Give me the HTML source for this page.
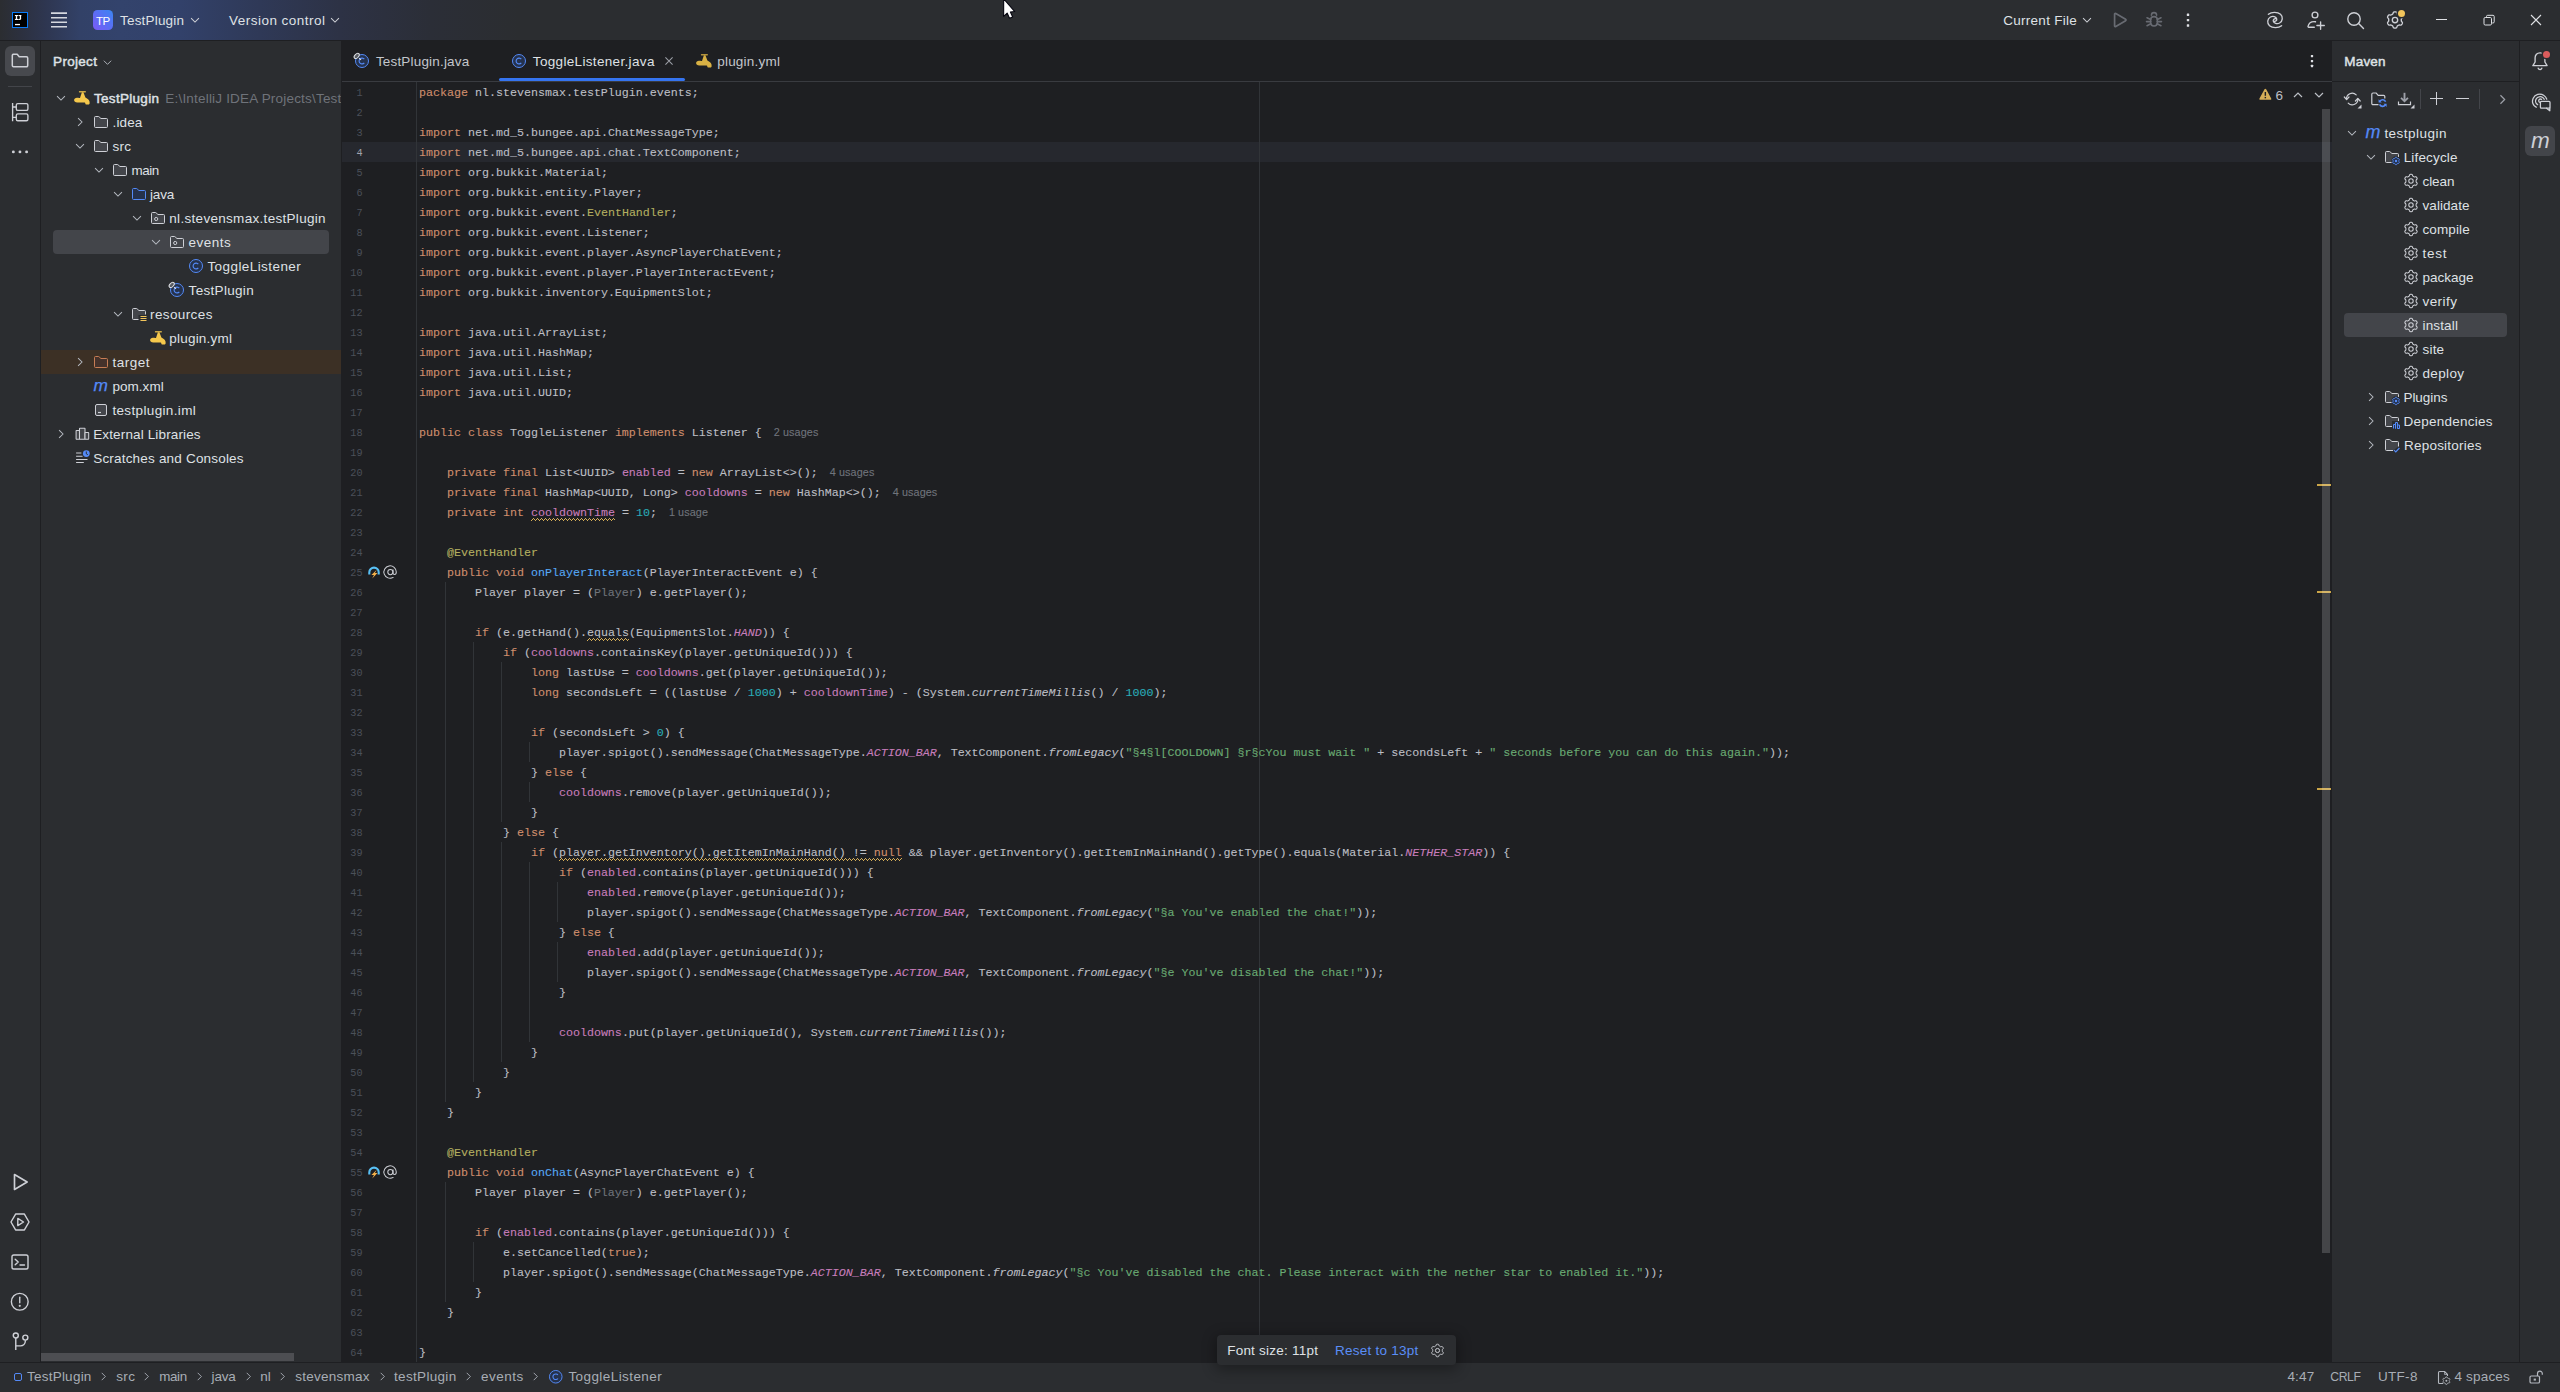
<!DOCTYPE html>
<html><head><meta charset="utf-8"><title>TestPlugin – ToggleListener.java</title>
<style>
html,body{margin:0;padding:0;}
body{width:2560px;height:1392px;overflow:hidden;background:#2b2d30;position:relative;font-family:"Liberation Sans",sans-serif;font-size:13.5px;color:#dfe1e5;}
.t{position:absolute;white-space:pre;line-height:20px;height:20px;}
.r{position:absolute;}
.i{position:absolute;overflow:visible;}
.code{position:absolute;left:419px;white-space:pre;font-family:"Liberation Mono",monospace;font-size:11.66px;line-height:20px;height:20px;color:#bcbec4;-webkit-text-stroke:0.1px;}
.ln{position:absolute;left:322px;width:40.6px;text-align:right;font-family:"Liberation Mono",monospace;font-size:11.5px;line-height:20px;height:20px;color:#4b5059;transform:scaleX(0.885);transform-origin:100% 50%;}
.k{color:#cf8e6d}.s{color:#6aab73}.n{color:#2aacb8}.f{color:#c77dbb}.m{color:#56a8f5}.a{color:#b3ae60}
.sf{color:#c77dbb;font-style:italic}.sm{font-style:italic}.g{color:#6f737a}
.h{line-height:0;font-family:"Liberation Sans",sans-serif;font-size:10.8px;color:#70747c;letter-spacing:0.1px}
.w{background:repeat-x left bottom;}

</style></head>
<body>
<div class="r" style="left:0px;top:0px;width:2560px;height:40px;background:#2b2d30;background:linear-gradient(90deg,#2b2d31 0px,#2c303e 20px,#2e3650 45px,#324167 80px,#33436c 120px,#32416a 180px,#2f3957 260px,#2d3245 340px,#2b2e37 430px,#2b2d30 520px);"></div>
<div class="r" style="left:0px;top:40px;width:2560px;height:1px;background:#1e1f22;"></div>
<div class="r" style="left:0px;top:41px;width:40px;height:1321px;background:#2b2d30;"></div>
<div class="r" style="left:40px;top:41px;width:1px;height:1321px;background:#1e1f22;"></div>
<div class="r" style="left:41px;top:41px;width:300px;height:1321px;background:#2b2d30;"></div>
<div class="r" style="left:341px;top:41px;width:1px;height:1321px;background:#1e1f22;"></div>
<div class="r" style="left:342px;top:41px;width:1990px;height:1321px;background:#1e1f22;"></div>
<div class="r" style="left:342px;top:81px;width:1990px;height:1px;background:#393b40;"></div>
<div class="r" style="left:2332px;top:41px;width:187px;height:1321px;background:#2b2d30;"></div>
<div class="r" style="left:2332px;top:81px;width:187px;height:1px;background:#1e1f22;"></div>
<div class="r" style="left:2519px;top:41px;width:1px;height:1321px;background:#1e1f22;"></div>
<div class="r" style="left:2520px;top:41px;width:40px;height:1321px;background:#2b2d30;"></div>
<div class="r" style="left:0px;top:1362px;width:2560px;height:30px;background:#2b2d30;"></div>
<div class="r" style="left:0px;top:1362px;width:2560px;height:1px;background:#1e1f22;"></div>
<div class="r" style="left:11.900px;top:11.900px;width:16.200px;height:16.200px;background:#000;box-sizing:border-box;border:1.250px solid #087cfa;"></div>
<svg class="i" style="left:0;top:0" width="80" height="40" viewBox="0 0 80 40"><g fill="#fff"><rect x="14.900" y="15" width="3.200" height="1.100"/><rect x="15.850" y="15" width="1.300" height="5"/><rect x="14.900" y="18.900" width="3.200" height="1.100"/><rect x="18.500" y="15" width="2.800" height="1.100"/><rect x="19.800" y="15" width="1.300" height="4.300"/><path d="M21.100 18.600c0 1-.6 1.400-1.500 1.400h-1.300v-1.100h1.100c.3 0 .4-.1.400-.4z"/><rect x="15" y="23.900" width="5" height="1.300"/></g><g stroke="#d5d8df" stroke-width="1.600"><path d="M51 13.100h16M51 17.800h16M51 22.250h16M51 26.800h16"/></g></svg>
<div class="r" style="left:93px;top:10px;width:20px;height:20px;border-radius:4.5px;background:linear-gradient(45deg,#7a5af5 0%,#5b6ef5 50%,#3a86f2 100%);"></div>
<span class="t" style="left:96.00px;top:11.00px;font-size:11.5px;color:#ffffff;letter-spacing:-0.403px;">TP</span>
<span class="t" style="left:120.00px;top:11.00px;font-size:13.5px;color:#dfe1e5;letter-spacing:0.189px;">TestPlugin</span>
<svg class="i" style="left:188.00px;top:13.30px;" width="14" height="14" viewBox="0 0 16 16" fill="none"><path d="M3.5 5.8L8 10.3l4.5-4.5" stroke="#ced0d6" stroke-width="1.15"/></svg>
<span class="t" style="left:229.00px;top:11.00px;font-size:13.5px;color:#dfe1e5;letter-spacing:0.478px;">Version control</span>
<svg class="i" style="left:328.00px;top:13.30px;" width="14" height="14" viewBox="0 0 16 16" fill="none"><path d="M3.5 5.8L8 10.3l4.5-4.5" stroke="#ced0d6" stroke-width="1.15"/></svg>
<span class="t" style="left:2003.30px;top:11.00px;font-size:13.5px;color:#dfe1e5;letter-spacing:0.261px;">Current File</span>
<svg class="i" style="left:2080.00px;top:13.30px;" width="14" height="14" viewBox="0 0 16 16" fill="none"><path d="M3.5 5.8L8 10.3l4.5-4.5" stroke="#ced0d6" stroke-width="1.15"/></svg>
<svg class="i" style="left:2109.60px;top:9.80px;" width="20" height="20" viewBox="0 0 20 20" fill="none"><path d="M4.600 4.100a.8.8 0 0 1 1.200-.7L15.600 9.300a.8.8 0 0 1 0 1.400L5.800 16.600a.8.800 0 0 1-1.200-.7z" stroke="#686b72" stroke-width="1.700" stroke-linejoin="round"/></svg>
<svg class="i" style="left:2144.00px;top:9.20px;" width="20" height="20" viewBox="0 0 20 20" fill="none"><g stroke="#686b72" stroke-width="1.550" stroke-linecap="round"><rect x="6.700" y="7.600" width="6.600" height="9.400" rx="3.200"/><path d="M7.400 6.200a2.600 2.600 0 0 1 5.200 0"/><path d="M6.700 10.500L3 8.700M6.700 12.600H2.500M6.700 14.800L3 16.700M13.300 10.500L17 8.700M13.300 12.600H17.500M13.300 14.800L17 16.700"/></g></svg>
<svg class="i" style="left:2180px;top:0" width="16" height="40" viewBox="0 0 16 40"><g fill="#dfe1e5"><rect x="6.800" y="13.600" width="2.400" height="2.400" rx=".5"/><rect x="6.800" y="18.900" width="2.400" height="2.400" rx=".5"/><rect x="6.800" y="24.300" width="2.400" height="2.400" rx=".5"/></g></svg>
<svg class="i" style="left:2265.00px;top:9.80px;" width="20" height="20" viewBox="0 0 20 20" fill="none"><g stroke="#ced0d6" stroke-width="1.350" stroke-linecap="round"><path d="M3.400 4.300C6.500 1.800 12.500 1.700 15.500 4.300C18.200 6.700 17.800 11.200 14.600 13C12.200 14.300 8.800 13.500 8.300 11.200C7.900 9.500 9.400 8.300 10.800 8.700"/><path d="M3.400 4.300C6.500 1.800 12.500 1.700 15.500 4.300C18.200 6.700 17.800 11.200 14.600 13C12.200 14.300 8.800 13.500 8.300 11.200C7.900 9.500 9.400 8.300 10.800 8.700" transform="rotate(180 10 10)"/></g></svg>
<svg class="i" style="left:2305.00px;top:10.00px;" width="20" height="20" viewBox="0 0 20 20" fill="none"><g stroke="#ced0d6" stroke-width="1.350" stroke-linecap="round"><circle cx="10" cy="5" r="2.900"/><path d="M9.300 17.200H3.600c-.4 0-.7-.4-.6-.800C3.700 13.500 6 11.600 9 11.600c.5 0 1 .05 1.500.150"/><path d="M15.600 11.800v7.400M11.900 15.500h7.400"/></g></svg>
<svg class="i" style="left:2345.00px;top:10.00px;" width="20" height="20" viewBox="0 0 20 20" fill="none"><g stroke="#ced0d6" stroke-width="1.400" stroke-linecap="round"><circle cx="9" cy="9" r="6.200"/><path d="M13.600 13.600l4.900 4.900"/></g></svg>
<svg class="i" style="left:2384.70px;top:10.00px;" width="20" height="20" viewBox="0 0 20 20" fill="none"><path d="M16.30 10.00L16.30 9.59L16.30 9.17L16.44 8.72L16.95 8.14L17.42 7.48L17.43 6.92L17.26 6.42L17.01 5.95L16.73 5.50L16.38 5.10L15.89 4.84L15.09 4.91L14.33 5.06L13.87 4.96L13.50 4.75L13.15 4.54L12.79 4.34L12.43 4.13L12.11 3.78L11.86 3.05L11.53 2.32L11.05 2.03L10.53 1.93L10.00 1.90L9.47 1.93L8.95 2.03L8.47 2.32L8.14 3.05L7.89 3.78L7.57 4.13L7.21 4.34L6.85 4.54L6.50 4.75L6.13 4.96L5.67 5.06L4.91 4.91L4.11 4.84L3.62 5.10L3.27 5.50L2.99 5.95L2.74 6.42L2.57 6.92L2.58 7.48L3.05 8.14L3.56 8.72L3.70 9.17L3.70 9.59L3.70 10.00L3.70 10.41L3.70 10.83L3.56 11.28L3.05 11.86L2.58 12.52L2.57 13.08L2.74 13.58L2.99 14.05L3.27 14.50L3.62 14.90L4.11 15.16L4.91 15.09L5.67 14.94L6.13 15.04L6.50 15.25L6.85 15.46L7.21 15.66L7.57 15.87L7.89 16.22L8.14 16.95L8.47 17.68L8.95 17.97L9.47 18.07L10.00 18.10L10.53 18.07L11.05 17.97L11.53 17.68L11.86 16.95L12.11 16.22L12.43 15.87L12.79 15.66L13.15 15.46L13.50 15.25L13.87 15.04L14.33 14.94L15.09 15.09L15.89 15.16L16.38 14.90L16.73 14.50L17.01 14.05L17.26 13.58L17.43 13.08L17.42 12.52L16.95 11.86L16.44 11.28L16.30 10.83L16.30 10.41z" stroke="#ced0d6" stroke-width="1.350" stroke-linejoin="round"/><circle cx="10" cy="10" r="2.700" stroke="#ced0d6" stroke-width="1.350"/></svg>
<div class="r" style="left:2398px;top:9.900px;width:7px;height:7px;border-radius:50%;background:#f2c55c;box-shadow:0 0 0 1.600px #2b2d30"></div>
<div class="r" style="left:2436px;top:19.3px;width:11px;height:1px;background:#dfe1e5;"></div>
<svg class="i" style="left:2481.50px;top:13.00px;" width="14" height="14" viewBox="0 0 14 14" fill="none"><rect x="2" y="4.500" width="7.500" height="7.500" rx="1.200" stroke="#dfe1e5" stroke-width="1"/><path d="M4.500 4.300v-.800a1.200 1.200 0 0 1 1.200-1.200h5.300a1.200 1.200 0 0 1 1.200 1.200v5.300a1.200 1.200 0 0 1-1.200 1.200h-.8" stroke="#dfe1e5" stroke-width="1"/></svg>
<svg class="i" style="left:2529.00px;top:13.00px;" width="14" height="14" viewBox="0 0 14 14" fill="none"><path d="M2 2l10 10M12 2l-10 10" stroke="#dfe1e5" stroke-width="1.100"/></svg>
<div class="r" style="left:5px;top:46px;width:30px;height:30px;border-radius:6px;background:#47494e"></div>
<svg class="i" style="left:10.00px;top:51.00px;" width="20" height="20" viewBox="0 0 20 20" fill="none"><path d="M3 4h4.200l2 2.500h7.300a1.200 1.200 0 0 1 1.200 1.200v7.600a1.200 1.200 0 0 1-1.200 1.200h-13a1.200 1.200 0 0 1-1.200-1.200v-10.100a1.200 1.200 0 0 1 1.200-1.200z" transform="translate(0 -.7)" stroke="#ced0d6" stroke-width="1.500" stroke-linejoin="round"/></svg>
<div class="r" style="left:8px;top:86px;width:24px;height:1px;background:#43454a;"></div>
<svg class="i" style="left:10.00px;top:102.00px;" width="20" height="20" viewBox="0 0 20 20" fill="none"><g stroke="#ced0d6" stroke-width="1.350" stroke-linejoin="round"><path d="M2.600 1v18.200M2.600 5h3.700M2.600 15.300h3.700"/><rect x="6.300" y="1.600" width="11.600" height="6.800" rx="1.500"/><rect x="6.300" y="11.900" width="11.600" height="6.800" rx="1.500"/></g></svg>
<svg class="i" style="left:0;top:140px" width="40" height="24" viewBox="0 0 40 24"><g fill="#ced0d6"><circle cx="13.350" cy="11.900" r="1.450"/><circle cx="19.950" cy="11.900" r="1.450"/><circle cx="26.600" cy="11.900" r="1.450"/></g></svg>
<svg class="i" style="left:9.00px;top:1171.00px;" width="22" height="22" viewBox="0 0 20 20" fill="none"><path d="M5 3.200L16.500 10 5 16.800z" stroke="#ced0d6" stroke-width="1.500" stroke-linejoin="round"/></svg>
<svg class="i" style="left:9.00px;top:1211.00px;" width="22" height="22" viewBox="0 0 20 20" fill="none"><g stroke="#ced0d6" stroke-width="1.300" stroke-linejoin="round"><path d="M6 2.800h8l4.200 7.200-4.200 7.200h-8L1.800 10z"/><path d="M8 6.800l5.200 3.200L8 13.200z"/></g></svg>
<svg class="i" style="left:10.00px;top:1252.00px;" width="20" height="20" viewBox="0 0 20 20" fill="none"><g stroke="#ced0d6" stroke-width="1.400" stroke-linecap="round" stroke-linejoin="round"><rect x="2" y="3" width="16" height="14" rx="1.800"/><path d="M5.200 7.200l3 2.800-3 2.800M10 13h4.500"/></g></svg>
<svg class="i" style="left:9.25px;top:1291.25px;" width="21.5" height="21.5" viewBox="0 0 20 20" fill="none"><g stroke="#ced0d6" stroke-width="1.300" stroke-linecap="round"><circle cx="10" cy="10" r="7.800"/><path d="M10 5.800v5.200"/></g><circle cx="10" cy="13.800" r="1" fill="#ced0d6"/></svg>
<svg class="i" style="left:9.50px;top:1331.00px;" width="21" height="21" viewBox="0 0 20 20" fill="none"><g stroke="#ced0d6" stroke-width="1.350"><circle cx="5.500" cy="4.300" r="2.400"/><circle cx="14.600" cy="6.300" r="2.400"/><path d="M5.500 6.700v11.500M5.500 14.200h4.500a4.600 4.600 0 0 0 4.600-4.600v-.9"/></g></svg>
<span class="t" style="left:53.10px;top:52.00px;font-size:13.5px;color:#dfe1e5;letter-spacing:0.295px;-webkit-text-stroke:0.450px;">Project</span>
<svg class="i" style="left:101.30px;top:55.50px;" width="13" height="13" viewBox="0 0 16 16" fill="none"><path d="M3.5 5.8L8 10.3l4.5-4.5" stroke="#b4b8bf" stroke-width="1.15"/></svg>
<div class="r" style="left:41px;top:350px;width:300px;height:24px;background:#3c3025;"></div>
<div class="r" style="left:53px;top:230px;width:276px;height:24px;border-radius:4px;background:#43454a"></div>
<svg class="i" style="left:54.00px;top:91.30px;" width="14" height="14" viewBox="0 0 16 16" fill="none"><path d="M3.5 5.8L8 10.3l4.5-4.5" stroke="#b4b8bf" stroke-width="1.15"/></svg>
<svg class="i" style="left:74.00px;top:90.00px;" width="16" height="16" viewBox="0 0 16 16" fill="none"><g fill="#f5c84c"><rect x="4.900" y="1" width="7" height="1.400" rx=".4" opacity=".8"/><path d="M7.900 2.300H9.400L11.400 7.600C12 7.900 12.500 8.100 13 8.400C14.500 9.200 15.500 10.400 15.600 12V13.600C15.600 14.100 15.300 14.400 14.800 14.400H12.200C11.600 14.400 11.300 14.100 11.300 13.500C11.300 12.900 10.900 12.500 10.300 12.500H3.300C1.300 12.500 .1 11.500 .1 10.100C.1 8.800 1.300 7.800 3 7.800C4 7.800 5 8.100 6 7.900Z"/></g></svg>
<span class="t" style="left:94.00px;top:89.00px;font-size:13.5px;color:#dfe1e5;letter-spacing:0.300px;-webkit-text-stroke:0.450px;">TestPlugin</span>
<div class="r" style="left:41px;top:88px;width:300px;height:20px;overflow:hidden"><span class="t" style="left:124.300px;top:1px;color:#6f737a;font-size:13.5px;letter-spacing:0.196px">E:\IntelliJ IDEA Projects\TestPlugin</span></div>
<svg class="i" style="left:73.00px;top:115.00px;" width="14" height="14" viewBox="0 0 16 16" fill="none"><path d="M5.8 3.5L10.3 8l-4.5 4.5" stroke="#b4b8bf" stroke-width="1.15"/></svg>
<svg class="i" style="left:93.00px;top:114.00px;" width="16" height="16" viewBox="0 0 16 16" fill="none"><path d="M2.5 2.5H5.6a1 1 0 0 1 .75.34L7.7 4.5h5.8a1 1 0 0 1 1 1v7a1 1 0 0 1-1 1h-11a1 1 0 0 1-1-1v-9a1 1 0 0 1 1-1z" fill="#43454a" stroke="#ced0d6"/></svg>
<span class="t" style="left:112.60px;top:113.00px;font-size:13.5px;color:#dfe1e5;letter-spacing:0.105px;">.idea</span>
<svg class="i" style="left:73.00px;top:139.30px;" width="14" height="14" viewBox="0 0 16 16" fill="none"><path d="M3.5 5.8L8 10.3l4.5-4.5" stroke="#b4b8bf" stroke-width="1.15"/></svg>
<svg class="i" style="left:93.00px;top:138.00px;" width="16" height="16" viewBox="0 0 16 16" fill="none"><path d="M2.5 2.5H5.6a1 1 0 0 1 .75.34L7.7 4.5h5.8a1 1 0 0 1 1 1v7a1 1 0 0 1-1 1h-11a1 1 0 0 1-1-1v-9a1 1 0 0 1 1-1z" fill="#43454a" stroke="#ced0d6"/></svg>
<span class="t" style="left:112.60px;top:137.00px;font-size:13.5px;color:#dfe1e5;letter-spacing:0.200px;">src</span>
<svg class="i" style="left:92.00px;top:163.30px;" width="14" height="14" viewBox="0 0 16 16" fill="none"><path d="M3.5 5.8L8 10.3l4.5-4.5" stroke="#b4b8bf" stroke-width="1.15"/></svg>
<svg class="i" style="left:112.00px;top:162.00px;" width="16" height="16" viewBox="0 0 16 16" fill="none"><path d="M2.5 2.5H5.6a1 1 0 0 1 .75.34L7.7 4.5h5.8a1 1 0 0 1 1 1v7a1 1 0 0 1-1 1h-11a1 1 0 0 1-1-1v-9a1 1 0 0 1 1-1z" fill="#43454a" stroke="#ced0d6"/></svg>
<span class="t" style="left:131.50px;top:161.00px;font-size:13.4px;color:#dfe1e5;letter-spacing:-0.410px;">main</span>
<svg class="i" style="left:111.00px;top:187.30px;" width="14" height="14" viewBox="0 0 16 16" fill="none"><path d="M3.5 5.8L8 10.3l4.5-4.5" stroke="#b4b8bf" stroke-width="1.15"/></svg>
<svg class="i" style="left:131.00px;top:186.00px;" width="16" height="16" viewBox="0 0 16 16" fill="none"><path d="M2.5 2.5H5.6a1 1 0 0 1 .75.34L7.7 4.5h5.8a1 1 0 0 1 1 1v7a1 1 0 0 1-1 1h-11a1 1 0 0 1-1-1v-9a1 1 0 0 1 1-1z" fill="#25324d" stroke="#548af7"/></svg>
<span class="t" style="left:150.00px;top:185.00px;font-size:13.5px;color:#dfe1e5;letter-spacing:-0.155px;">java</span>
<svg class="i" style="left:130.00px;top:211.30px;" width="14" height="14" viewBox="0 0 16 16" fill="none"><path d="M3.5 5.8L8 10.3l4.5-4.5" stroke="#b4b8bf" stroke-width="1.15"/></svg>
<svg class="i" style="left:150.00px;top:210.00px;" width="16" height="16" viewBox="0 0 16 16" fill="none"><path d="M2.5 2.5H5.6a1 1 0 0 1 .75.34L7.7 4.5h5.8a1 1 0 0 1 1 1v7a1 1 0 0 1-1 1h-11a1 1 0 0 1-1-1v-9a1 1 0 0 1 1-1z" fill="#43454a" stroke="#ced0d6"/><circle cx="6.2" cy="9" r="1.6" stroke="#ced0d6"/></svg>
<span class="t" style="left:169.30px;top:209.00px;font-size:13.5px;color:#dfe1e5;letter-spacing:0.303px;">nl.stevensmax.testPlugin</span>
<svg class="i" style="left:149.00px;top:235.30px;" width="14" height="14" viewBox="0 0 16 16" fill="none"><path d="M3.5 5.8L8 10.3l4.5-4.5" stroke="#b4b8bf" stroke-width="1.15"/></svg>
<svg class="i" style="left:169.00px;top:234.00px;" width="16" height="16" viewBox="0 0 16 16" fill="none"><path d="M2.5 2.5H5.6a1 1 0 0 1 .75.34L7.7 4.5h5.8a1 1 0 0 1 1 1v7a1 1 0 0 1-1 1h-11a1 1 0 0 1-1-1v-9a1 1 0 0 1 1-1z" fill="#43454a" stroke="#ced0d6"/><circle cx="6.2" cy="9" r="1.6" stroke="#ced0d6"/></svg>
<span class="t" style="left:188.40px;top:233.00px;font-size:13.5px;color:#dfe1e5;letter-spacing:0.504px;">events</span>
<svg class="i" style="left:188.00px;top:258.00px;" width="16" height="16" viewBox="0 0 16 16" fill="none"><circle cx="8" cy="8" r="6.5" fill="#25324d" stroke="#548af7"/><path d="M10.3 6.2a2.9 2.9 0 1 0 0 3.6" stroke="#548af7" stroke-width="1.15"/></svg>
<span class="t" style="left:207.40px;top:257.00px;font-size:13.5px;color:#dfe1e5;letter-spacing:0.430px;">ToggleListener</span>
<svg class="i" style="left:169.00px;top:282.00px;" width="16" height="16" viewBox="0 0 16 16" fill="none"><circle cx="8" cy="8" r="6.5" fill="#25324d" stroke="#548af7"/><path d="M10.3 6.2a2.9 2.9 0 1 0 0 3.6" stroke="#548af7" stroke-width="1.15"/><g transform="rotate(-45 2.7 2.9)"><ellipse cx="2.7" cy="2.9" rx="3.1" ry="1.9" fill="#5a5d63" stroke="#dfe1e5" stroke-width="1"/></g><path d="M5.100 5.200L7 6.900" stroke="#dfe1e5" stroke-width="1.100"/></svg>
<span class="t" style="left:188.60px;top:281.00px;font-size:13.5px;color:#dfe1e5;letter-spacing:0.311px;">TestPlugin</span>
<svg class="i" style="left:111.00px;top:307.30px;" width="14" height="14" viewBox="0 0 16 16" fill="none"><path d="M3.5 5.8L8 10.3l4.5-4.5" stroke="#b4b8bf" stroke-width="1.15"/></svg>
<svg class="i" style="left:131.00px;top:306.00px;" width="16" height="16" viewBox="0 0 16 16" fill="none"><path d="M8.5 13.5h-6a1 1 0 0 1-1-1v-9a1 1 0 0 1 1-1H5.6a1 1 0 0 1 .75.34L7.7 4.5h5.8a1 1 0 0 1 1 1v3" fill="#43454a" stroke="#ced0d6"/><rect x="7.5" y="9" width="9" height="7" fill="#2b2d30"/><path d="M9.5 10.5h6M9.5 12.5h6M9.5 14.5h6" stroke="#f2c55c" stroke-width="1.1"/></svg>
<span class="t" style="left:150.10px;top:305.00px;font-size:13.5px;color:#dfe1e5;letter-spacing:0.377px;">resources</span>
<svg class="i" style="left:149.50px;top:330.00px;" width="16" height="16" viewBox="0 0 16 16" fill="none"><g fill="#f5c84c"><rect x="4.900" y="1" width="7" height="1.400" rx=".4" opacity=".8"/><path d="M7.900 2.300H9.400L11.400 7.600C12 7.900 12.500 8.100 13 8.400C14.500 9.200 15.500 10.400 15.600 12V13.600C15.600 14.100 15.300 14.400 14.800 14.400H12.200C11.600 14.400 11.300 14.100 11.300 13.500C11.300 12.900 10.900 12.500 10.300 12.500H3.300C1.300 12.500 .1 11.500 .1 10.100C.1 8.800 1.300 7.800 3 7.800C4 7.800 5 8.100 6 7.900Z"/></g></svg>
<span class="t" style="left:169.30px;top:329.00px;font-size:13.5px;color:#dfe1e5;letter-spacing:0.202px;">plugin.yml</span>
<svg class="i" style="left:73.00px;top:355.00px;" width="14" height="14" viewBox="0 0 16 16" fill="none"><path d="M5.8 3.5L10.3 8l-4.5 4.5" stroke="#b4b8bf" stroke-width="1.15"/></svg>
<svg class="i" style="left:93.00px;top:354.00px;" width="16" height="16" viewBox="0 0 16 16" fill="none"><path d="M2.5 2.5H5.6a1 1 0 0 1 .75.34L7.7 4.5h5.8a1 1 0 0 1 1 1v7a1 1 0 0 1-1 1h-11a1 1 0 0 1-1-1v-9a1 1 0 0 1 1-1z" fill="#45322b" stroke="#c77d55"/></svg>
<span class="t" style="left:112.40px;top:353.00px;font-size:13.5px;color:#dfe1e5;letter-spacing:0.494px;">target</span>
<span class="t" style="left:112.40px;top:377.00px;font-size:13.5px;color:#dfe1e5;letter-spacing:0.047px;">pom.xml</span>
<span class="t" style="left:93.50px;top:374.70px;font-size:17.3px;color:#548af7;letter-spacing:-0.406px;font-style:italic;-webkit-text-stroke:0.250px;">m</span>
<svg class="i" style="left:93.00px;top:402.00px;" width="16" height="16" viewBox="0 0 16 16" fill="none"><rect x="2.5" y="2.5" width="11" height="11" rx="1.5" stroke="#ced0d6" fill="#43454a"/><path d="M5 10.5h3" stroke="#ced0d6" stroke-width="1.2"/></svg>
<span class="t" style="left:112.40px;top:401.00px;font-size:13.5px;color:#dfe1e5;letter-spacing:0.354px;">testplugin.iml</span>
<svg class="i" style="left:54.00px;top:427.00px;" width="14" height="14" viewBox="0 0 16 16" fill="none"><path d="M5.8 3.5L10.3 8l-4.5 4.5" stroke="#b4b8bf" stroke-width="1.15"/></svg>
<svg class="i" style="left:74.00px;top:426.00px;" width="16" height="16" viewBox="0 0 16 16" fill="none"><g stroke="#ced0d6" fill="#43454a" stroke-width="1.050" stroke-linejoin="round"><rect x="2.100" y="4.400" width="3.400" height="8.800" rx=".4"/><rect x="5.500" y="2.200" width="5.500" height="11" rx=".4"/><rect x="11" y="6.500" width="3.700" height="6.700" rx=".4"/></g></svg>
<span class="t" style="left:93.20px;top:425.00px;font-size:13.5px;color:#dfe1e5;letter-spacing:0.138px;">External Libraries</span>
<svg class="i" style="left:74.00px;top:450.00px;" width="16" height="16" viewBox="0 0 16 16" fill="none"><path d="M2.100 3h5.300M2.100 6.300h6.500M2.100 9.400h11.400M2.100 12.400h7.700" stroke="#ced0d6" stroke-width="1.050"/><circle cx="12.300" cy="3.600" r="3.900" fill="#2b2d30"/><circle cx="12.300" cy="3.600" r="3.400" fill="#548af7"/><path d="M12.300 1.500v2.300l1.500.9" stroke="#2b2d30" stroke-width="1"/></svg>
<span class="t" style="left:93.20px;top:449.00px;font-size:13.5px;color:#dfe1e5;letter-spacing:0.193px;">Scratches and Consoles</span>
<div class="r" style="left:41px;top:1353px;width:253px;height:8px;background:#4d4e52;"></div>
<svg class="i" style="left:354.00px;top:53.00px;" width="16" height="16" viewBox="0 0 16 16" fill="none"><circle cx="8" cy="8" r="6.5" fill="#25324d" stroke="#548af7"/><path d="M10.3 6.2a2.9 2.9 0 1 0 0 3.6" stroke="#548af7" stroke-width="1.15"/><g transform="rotate(-45 2.7 2.9)"><ellipse cx="2.7" cy="2.9" rx="3.1" ry="1.9" fill="#5a5d63" stroke="#dfe1e5" stroke-width="1"/></g><path d="M5.100 5.200L7 6.900" stroke="#dfe1e5" stroke-width="1.100"/></svg>
<span class="t" style="left:375.90px;top:52.00px;font-size:13.5px;color:#c3c6cc;letter-spacing:0.178px;">TestPlugin.java</span>
<svg class="i" style="left:511.00px;top:53.00px;" width="16" height="16" viewBox="0 0 16 16" fill="none"><circle cx="8" cy="8" r="6.5" fill="#25324d" stroke="#548af7"/><path d="M10.3 6.2a2.9 2.9 0 1 0 0 3.6" stroke="#548af7" stroke-width="1.15"/></svg>
<span class="t" style="left:532.80px;top:52.00px;font-size:13.5px;color:#dfe1e5;letter-spacing:0.334px;">ToggleListener.java</span>
<svg class="i" style="left:663.00px;top:55.30px;" width="12" height="12" viewBox="0 0 10 10" fill="none"><path d="M2 2l6 6M8 2l-6 6" stroke="#9da0a8" stroke-width=".85"/></svg>
<div class="r" style="left:499px;top:78px;width:186px;height:3px;border-radius:1.500px;background:#3574f0"></div>
<svg class="i" style="left:695.60px;top:53.00px;" width="16" height="16" viewBox="0 0 16 16" fill="none"><g fill="#d9b144"><rect x="4.900" y="1" width="7" height="1.400" rx=".4" opacity=".8"/><path d="M7.900 2.300H9.400L11.400 7.600C12 7.900 12.500 8.100 13 8.400C14.500 9.200 15.500 10.400 15.600 12V13.600C15.600 14.100 15.300 14.400 14.800 14.400H12.200C11.600 14.400 11.300 14.100 11.300 13.500C11.300 12.900 10.900 12.500 10.300 12.500H3.300C1.300 12.500 .1 11.500 .1 10.100C.1 8.800 1.300 7.800 3 7.800C4 7.800 5 8.100 6 7.900Z"/></g></svg>
<span class="t" style="left:717.20px;top:52.00px;font-size:13.5px;color:#c3c6cc;letter-spacing:0.224px;">plugin.yml</span>
<svg class="i" style="left:2304px;top:48px" width="16" height="28" viewBox="0 0 16 28"><g fill="#dfe1e5"><rect x="6.850" y="6.950" width="2.300" height="2.300" rx=".4"/><rect x="6.850" y="11.950" width="2.300" height="2.300" rx=".4"/><rect x="6.850" y="16.850" width="2.300" height="2.300" rx=".4"/></g></svg>
<span class="t" style="left:2344.30px;top:52.00px;font-size:13.5px;color:#dfe1e5;letter-spacing:0.167px;-webkit-text-stroke:0.450px;">Maven</span>
<svg class="i" style="left:2342.50px;top:90.00px;" width="18" height="18" viewBox="0 0 18 18" fill="none"><g stroke="#ced0d6" stroke-width="1.200" stroke-linecap="round" stroke-linejoin="round"><path d="M13.200 4.900A5.600 5.600 0 0 0 3.600 9.400"/><path d="M1.300 7L3.600 9.600L6 7"/><path d="M5.200 13.100A5.600 5.600 0 0 0 14.800 8.600"/><path d="M12.400 11L14.800 8.400L17.200 11"/></g><path d="M18.500 14.500v4h-4z" fill="#ced0d6"/></svg>
<svg class="i" style="left:2369.50px;top:90.00px;" width="18" height="18" viewBox="0 0 18 18" fill="none"><path d="M8.500 14.700H3a1.200 1.200 0 0 1-1.200-1.200V4.200A1.200 1.200 0 0 1 3 3h3.200l2 2.300h5.400a1.200 1.200 0 0 1 1.200 1.200v2" stroke="#ced0d6" stroke-width="1.200"/><g stroke="#548af7" stroke-width="1.600"><path d="M15.600 11.800a3.200 3.200 0 0 0-5.600-.6"/><path d="M9.600 14.400a3.200 3.200 0 0 0 5.600.6"/></g><path d="M8.600 9.300v3.100h3.100zM16.600 16.900v-3.100h-3.100z" fill="#548af7"/></svg>
<svg class="i" style="left:2395.50px;top:90.00px;" width="18" height="18" viewBox="0 0 18 18" fill="none"><path d="M8.500 2.800v7.400" stroke="#9da0a8" stroke-width="1.900"/><path d="M5 7.800l3.500 3.400 3.500-3.400" stroke="#9da0a8" stroke-width="1.700" stroke-linejoin="miter"/><path d="M2.500 11.500v3.200h12v-3.200" stroke="#ced0d6" stroke-width="1.200"/><path d="M18.500 14.500v4h-4z" fill="#ced0d6"/></svg>
<div class="r" style="left:2420px;top:89px;width:1px;height:20px;background:#43454a;"></div>
<div class="r" style="left:2430px;top:98.2px;width:13px;height:1.1px;background:#ced0d6;"></div>
<div class="r" style="left:2436px;top:92.2px;width:1.1px;height:13px;background:#ced0d6;"></div>
<div class="r" style="left:2455.5px;top:98.2px;width:13.5px;height:1.1px;background:#ced0d6;"></div>
<div class="r" style="left:2479px;top:89px;width:1px;height:20px;background:#43454a;"></div>
<svg class="i" style="left:2495.00px;top:91.50px;" width="15" height="15" viewBox="0 0 16 16" fill="none"><path d="M5.8 3.5L10.3 8l-4.5 4.5" stroke="#9da0a8" stroke-width="1.3"/></svg>
<div class="r" style="left:2344px;top:313px;width:163px;height:24px;border-radius:4px;background:#43454a"></div>
<svg class="i" style="left:2345.00px;top:126.30px;" width="14" height="14" viewBox="0 0 16 16" fill="none"><path d="M3.5 5.8L8 10.3l4.5-4.5" stroke="#b4b8bf" stroke-width="1.15"/></svg>
<span class="t" style="left:2365.50px;top:122.30px;font-size:17.9px;color:#548af7;letter-spacing:-0.406px;font-style:italic;-webkit-text-stroke:0.250px;">m</span>
<span class="t" style="left:2384.40px;top:124.00px;font-size:13.5px;color:#dfe1e5;letter-spacing:0.478px;">testplugin</span>
<svg class="i" style="left:2364.00px;top:150.30px;" width="14" height="14" viewBox="0 0 16 16" fill="none"><path d="M3.5 5.8L8 10.3l4.5-4.5" stroke="#b4b8bf" stroke-width="1.15"/></svg>
<svg class="i" style="left:2384.00px;top:149.00px;" width="16" height="16" viewBox="0 0 16 16" fill="none"><path d="M8 13.5H2.5a1 1 0 0 1-1-1v-9a1 1 0 0 1 1-1H5.6a1 1 0 0 1 .75.34L7.7 4.5h5.8a1 1 0 0 1 1 1v2.5" fill="#43454a" stroke="#ced0d6"/><circle cx="12" cy="12" r="4.700" fill="#2b2d30"/><path d="M14.90 12.00L14.90 11.70L14.99 11.36L15.37 10.91L15.37 10.50L15.20 10.15L14.98 9.83L14.63 9.63L14.05 9.73L13.71 9.64L13.45 9.49L13.18 9.34L12.94 9.09L12.74 8.53L12.39 8.33L12.00 8.30L11.61 8.33L11.26 8.53L11.06 9.09L10.82 9.34L10.55 9.49L10.29 9.64L9.95 9.73L9.37 9.63L9.02 9.83L8.80 10.15L8.63 10.50L8.63 10.91L9.01 11.36L9.10 11.70L9.10 12.00L9.10 12.30L9.01 12.64L8.63 13.09L8.63 13.50L8.80 13.85L9.02 14.17L9.37 14.37L9.95 14.27L10.29 14.36L10.55 14.51L10.82 14.66L11.06 14.91L11.26 15.47L11.61 15.67L12.00 15.70L12.39 15.67L12.74 15.47L12.94 14.91L13.18 14.66L13.45 14.51L13.71 14.36L14.05 14.27L14.63 14.37L14.98 14.17L15.20 13.85L15.37 13.50L15.37 13.09L14.99 12.64L14.90 12.30z" stroke="#548af7" fill="#25324d" stroke-width="1" stroke-linejoin="round"/><circle cx="12" cy="12" r="1.200" fill="#548af7"/></svg>
<span class="t" style="left:2403.70px;top:148.00px;font-size:13.5px;color:#dfe1e5;letter-spacing:0.159px;">Lifecycle</span>
<svg class="i" style="left:2403.00px;top:173.00px;" width="16" height="16" viewBox="0 0 16 16" fill="none"><path d="M13.10 8.00L13.10 7.67L13.11 7.33L13.23 6.96L13.70 6.47L14.12 5.92L14.14 5.46L14.00 5.04L13.80 4.65L13.56 4.28L13.28 3.95L12.86 3.74L12.17 3.83L11.52 3.99L11.14 3.91L10.84 3.75L10.55 3.58L10.26 3.42L9.97 3.24L9.72 2.95L9.53 2.30L9.26 1.66L8.87 1.41L8.44 1.32L8.00 1.30L7.56 1.32L7.13 1.41L6.74 1.66L6.47 2.30L6.28 2.95L6.03 3.24L5.74 3.42L5.45 3.58L5.16 3.75L4.86 3.91L4.48 3.99L3.83 3.83L3.14 3.74L2.72 3.95L2.44 4.28L2.20 4.65L2.00 5.04L1.86 5.46L1.88 5.92L2.30 6.47L2.77 6.96L2.89 7.33L2.90 7.67L2.90 8.00L2.90 8.33L2.89 8.67L2.77 9.04L2.30 9.53L1.88 10.08L1.86 10.54L2.00 10.96L2.20 11.35L2.44 11.72L2.72 12.05L3.14 12.26L3.83 12.17L4.48 12.01L4.86 12.09L5.16 12.25L5.45 12.42L5.74 12.58L6.03 12.76L6.28 13.05L6.47 13.70L6.74 14.34L7.13 14.59L7.56 14.68L8.00 14.70L8.44 14.68L8.87 14.59L9.26 14.34L9.53 13.70L9.72 13.05L9.97 12.76L10.26 12.58L10.55 12.42L10.84 12.25L11.14 12.09L11.52 12.01L12.17 12.17L12.86 12.26L13.28 12.05L13.56 11.72L13.80 11.35L14.00 10.96L14.14 10.54L14.12 10.08L13.70 9.53L13.23 9.04L13.11 8.67L13.10 8.33z" stroke="#ced0d6" stroke-width="1.05" stroke-linejoin="round"/><circle cx="8" cy="8" r="2.2" stroke="#ced0d6" stroke-width="1.05"/></svg>
<span class="t" style="left:2422.50px;top:172.00px;font-size:13.5px;color:#dfe1e5;letter-spacing:-0.095px;">clean</span>
<svg class="i" style="left:2403.00px;top:197.00px;" width="16" height="16" viewBox="0 0 16 16" fill="none"><path d="M13.10 8.00L13.10 7.67L13.11 7.33L13.23 6.96L13.70 6.47L14.12 5.92L14.14 5.46L14.00 5.04L13.80 4.65L13.56 4.28L13.28 3.95L12.86 3.74L12.17 3.83L11.52 3.99L11.14 3.91L10.84 3.75L10.55 3.58L10.26 3.42L9.97 3.24L9.72 2.95L9.53 2.30L9.26 1.66L8.87 1.41L8.44 1.32L8.00 1.30L7.56 1.32L7.13 1.41L6.74 1.66L6.47 2.30L6.28 2.95L6.03 3.24L5.74 3.42L5.45 3.58L5.16 3.75L4.86 3.91L4.48 3.99L3.83 3.83L3.14 3.74L2.72 3.95L2.44 4.28L2.20 4.65L2.00 5.04L1.86 5.46L1.88 5.92L2.30 6.47L2.77 6.96L2.89 7.33L2.90 7.67L2.90 8.00L2.90 8.33L2.89 8.67L2.77 9.04L2.30 9.53L1.88 10.08L1.86 10.54L2.00 10.96L2.20 11.35L2.44 11.72L2.72 12.05L3.14 12.26L3.83 12.17L4.48 12.01L4.86 12.09L5.16 12.25L5.45 12.42L5.74 12.58L6.03 12.76L6.28 13.05L6.47 13.70L6.74 14.34L7.13 14.59L7.56 14.68L8.00 14.70L8.44 14.68L8.87 14.59L9.26 14.34L9.53 13.70L9.72 13.05L9.97 12.76L10.26 12.58L10.55 12.42L10.84 12.25L11.14 12.09L11.52 12.01L12.17 12.17L12.86 12.26L13.28 12.05L13.56 11.72L13.80 11.35L14.00 10.96L14.14 10.54L14.12 10.08L13.70 9.53L13.23 9.04L13.11 8.67L13.10 8.33z" stroke="#ced0d6" stroke-width="1.05" stroke-linejoin="round"/><circle cx="8" cy="8" r="2.2" stroke="#ced0d6" stroke-width="1.05"/></svg>
<span class="t" style="left:2422.50px;top:196.00px;font-size:13.5px;color:#dfe1e5;letter-spacing:0.065px;">validate</span>
<svg class="i" style="left:2403.00px;top:221.00px;" width="16" height="16" viewBox="0 0 16 16" fill="none"><path d="M13.10 8.00L13.10 7.67L13.11 7.33L13.23 6.96L13.70 6.47L14.12 5.92L14.14 5.46L14.00 5.04L13.80 4.65L13.56 4.28L13.28 3.95L12.86 3.74L12.17 3.83L11.52 3.99L11.14 3.91L10.84 3.75L10.55 3.58L10.26 3.42L9.97 3.24L9.72 2.95L9.53 2.30L9.26 1.66L8.87 1.41L8.44 1.32L8.00 1.30L7.56 1.32L7.13 1.41L6.74 1.66L6.47 2.30L6.28 2.95L6.03 3.24L5.74 3.42L5.45 3.58L5.16 3.75L4.86 3.91L4.48 3.99L3.83 3.83L3.14 3.74L2.72 3.95L2.44 4.28L2.20 4.65L2.00 5.04L1.86 5.46L1.88 5.92L2.30 6.47L2.77 6.96L2.89 7.33L2.90 7.67L2.90 8.00L2.90 8.33L2.89 8.67L2.77 9.04L2.30 9.53L1.88 10.08L1.86 10.54L2.00 10.96L2.20 11.35L2.44 11.72L2.72 12.05L3.14 12.26L3.83 12.17L4.48 12.01L4.86 12.09L5.16 12.25L5.45 12.42L5.74 12.58L6.03 12.76L6.28 13.05L6.47 13.70L6.74 14.34L7.13 14.59L7.56 14.68L8.00 14.70L8.44 14.68L8.87 14.59L9.26 14.34L9.53 13.70L9.72 13.05L9.97 12.76L10.26 12.58L10.55 12.42L10.84 12.25L11.14 12.09L11.52 12.01L12.17 12.17L12.86 12.26L13.28 12.05L13.56 11.72L13.80 11.35L14.00 10.96L14.14 10.54L14.12 10.08L13.70 9.53L13.23 9.04L13.11 8.67L13.10 8.33z" stroke="#ced0d6" stroke-width="1.05" stroke-linejoin="round"/><circle cx="8" cy="8" r="2.2" stroke="#ced0d6" stroke-width="1.05"/></svg>
<span class="t" style="left:2422.50px;top:220.00px;font-size:13.5px;color:#dfe1e5;letter-spacing:0.111px;">compile</span>
<svg class="i" style="left:2403.00px;top:245.00px;" width="16" height="16" viewBox="0 0 16 16" fill="none"><path d="M13.10 8.00L13.10 7.67L13.11 7.33L13.23 6.96L13.70 6.47L14.12 5.92L14.14 5.46L14.00 5.04L13.80 4.65L13.56 4.28L13.28 3.95L12.86 3.74L12.17 3.83L11.52 3.99L11.14 3.91L10.84 3.75L10.55 3.58L10.26 3.42L9.97 3.24L9.72 2.95L9.53 2.30L9.26 1.66L8.87 1.41L8.44 1.32L8.00 1.30L7.56 1.32L7.13 1.41L6.74 1.66L6.47 2.30L6.28 2.95L6.03 3.24L5.74 3.42L5.45 3.58L5.16 3.75L4.86 3.91L4.48 3.99L3.83 3.83L3.14 3.74L2.72 3.95L2.44 4.28L2.20 4.65L2.00 5.04L1.86 5.46L1.88 5.92L2.30 6.47L2.77 6.96L2.89 7.33L2.90 7.67L2.90 8.00L2.90 8.33L2.89 8.67L2.77 9.04L2.30 9.53L1.88 10.08L1.86 10.54L2.00 10.96L2.20 11.35L2.44 11.72L2.72 12.05L3.14 12.26L3.83 12.17L4.48 12.01L4.86 12.09L5.16 12.25L5.45 12.42L5.74 12.58L6.03 12.76L6.28 13.05L6.47 13.70L6.74 14.34L7.13 14.59L7.56 14.68L8.00 14.70L8.44 14.68L8.87 14.59L9.26 14.34L9.53 13.70L9.72 13.05L9.97 12.76L10.26 12.58L10.55 12.42L10.84 12.25L11.14 12.09L11.52 12.01L12.17 12.17L12.86 12.26L13.28 12.05L13.56 11.72L13.80 11.35L14.00 10.96L14.14 10.54L14.12 10.08L13.70 9.53L13.23 9.04L13.11 8.67L13.10 8.33z" stroke="#ced0d6" stroke-width="1.05" stroke-linejoin="round"/><circle cx="8" cy="8" r="2.2" stroke="#ced0d6" stroke-width="1.05"/></svg>
<span class="t" style="left:2422.50px;top:244.00px;font-size:13.5px;color:#dfe1e5;letter-spacing:0.778px;">test</span>
<svg class="i" style="left:2403.00px;top:269.00px;" width="16" height="16" viewBox="0 0 16 16" fill="none"><path d="M13.10 8.00L13.10 7.67L13.11 7.33L13.23 6.96L13.70 6.47L14.12 5.92L14.14 5.46L14.00 5.04L13.80 4.65L13.56 4.28L13.28 3.95L12.86 3.74L12.17 3.83L11.52 3.99L11.14 3.91L10.84 3.75L10.55 3.58L10.26 3.42L9.97 3.24L9.72 2.95L9.53 2.30L9.26 1.66L8.87 1.41L8.44 1.32L8.00 1.30L7.56 1.32L7.13 1.41L6.74 1.66L6.47 2.30L6.28 2.95L6.03 3.24L5.74 3.42L5.45 3.58L5.16 3.75L4.86 3.91L4.48 3.99L3.83 3.83L3.14 3.74L2.72 3.95L2.44 4.28L2.20 4.65L2.00 5.04L1.86 5.46L1.88 5.92L2.30 6.47L2.77 6.96L2.89 7.33L2.90 7.67L2.90 8.00L2.90 8.33L2.89 8.67L2.77 9.04L2.30 9.53L1.88 10.08L1.86 10.54L2.00 10.96L2.20 11.35L2.44 11.72L2.72 12.05L3.14 12.26L3.83 12.17L4.48 12.01L4.86 12.09L5.16 12.25L5.45 12.42L5.74 12.58L6.03 12.76L6.28 13.05L6.47 13.70L6.74 14.34L7.13 14.59L7.56 14.68L8.00 14.70L8.44 14.68L8.87 14.59L9.26 14.34L9.53 13.70L9.72 13.05L9.97 12.76L10.26 12.58L10.55 12.42L10.84 12.25L11.14 12.09L11.52 12.01L12.17 12.17L12.86 12.26L13.28 12.05L13.56 11.72L13.80 11.35L14.00 10.96L14.14 10.54L14.12 10.08L13.70 9.53L13.23 9.04L13.11 8.67L13.10 8.33z" stroke="#ced0d6" stroke-width="1.05" stroke-linejoin="round"/><circle cx="8" cy="8" r="2.2" stroke="#ced0d6" stroke-width="1.05"/></svg>
<span class="t" style="left:2422.50px;top:268.00px;font-size:13.5px;color:#dfe1e5;letter-spacing:-0.024px;">package</span>
<svg class="i" style="left:2403.00px;top:293.00px;" width="16" height="16" viewBox="0 0 16 16" fill="none"><path d="M13.10 8.00L13.10 7.67L13.11 7.33L13.23 6.96L13.70 6.47L14.12 5.92L14.14 5.46L14.00 5.04L13.80 4.65L13.56 4.28L13.28 3.95L12.86 3.74L12.17 3.83L11.52 3.99L11.14 3.91L10.84 3.75L10.55 3.58L10.26 3.42L9.97 3.24L9.72 2.95L9.53 2.30L9.26 1.66L8.87 1.41L8.44 1.32L8.00 1.30L7.56 1.32L7.13 1.41L6.74 1.66L6.47 2.30L6.28 2.95L6.03 3.24L5.74 3.42L5.45 3.58L5.16 3.75L4.86 3.91L4.48 3.99L3.83 3.83L3.14 3.74L2.72 3.95L2.44 4.28L2.20 4.65L2.00 5.04L1.86 5.46L1.88 5.92L2.30 6.47L2.77 6.96L2.89 7.33L2.90 7.67L2.90 8.00L2.90 8.33L2.89 8.67L2.77 9.04L2.30 9.53L1.88 10.08L1.86 10.54L2.00 10.96L2.20 11.35L2.44 11.72L2.72 12.05L3.14 12.26L3.83 12.17L4.48 12.01L4.86 12.09L5.16 12.25L5.45 12.42L5.74 12.58L6.03 12.76L6.28 13.05L6.47 13.70L6.74 14.34L7.13 14.59L7.56 14.68L8.00 14.70L8.44 14.68L8.87 14.59L9.26 14.34L9.53 13.70L9.72 13.05L9.97 12.76L10.26 12.58L10.55 12.42L10.84 12.25L11.14 12.09L11.52 12.01L12.17 12.17L12.86 12.26L13.28 12.05L13.56 11.72L13.80 11.35L14.00 10.96L14.14 10.54L14.12 10.08L13.70 9.53L13.23 9.04L13.11 8.67L13.10 8.33z" stroke="#ced0d6" stroke-width="1.05" stroke-linejoin="round"/><circle cx="8" cy="8" r="2.2" stroke="#ced0d6" stroke-width="1.05"/></svg>
<span class="t" style="left:2422.50px;top:292.00px;font-size:13.5px;color:#dfe1e5;letter-spacing:0.427px;">verify</span>
<svg class="i" style="left:2403.00px;top:317.00px;" width="16" height="16" viewBox="0 0 16 16" fill="none"><path d="M13.10 8.00L13.10 7.67L13.11 7.33L13.23 6.96L13.70 6.47L14.12 5.92L14.14 5.46L14.00 5.04L13.80 4.65L13.56 4.28L13.28 3.95L12.86 3.74L12.17 3.83L11.52 3.99L11.14 3.91L10.84 3.75L10.55 3.58L10.26 3.42L9.97 3.24L9.72 2.95L9.53 2.30L9.26 1.66L8.87 1.41L8.44 1.32L8.00 1.30L7.56 1.32L7.13 1.41L6.74 1.66L6.47 2.30L6.28 2.95L6.03 3.24L5.74 3.42L5.45 3.58L5.16 3.75L4.86 3.91L4.48 3.99L3.83 3.83L3.14 3.74L2.72 3.95L2.44 4.28L2.20 4.65L2.00 5.04L1.86 5.46L1.88 5.92L2.30 6.47L2.77 6.96L2.89 7.33L2.90 7.67L2.90 8.00L2.90 8.33L2.89 8.67L2.77 9.04L2.30 9.53L1.88 10.08L1.86 10.54L2.00 10.96L2.20 11.35L2.44 11.72L2.72 12.05L3.14 12.26L3.83 12.17L4.48 12.01L4.86 12.09L5.16 12.25L5.45 12.42L5.74 12.58L6.03 12.76L6.28 13.05L6.47 13.70L6.74 14.34L7.13 14.59L7.56 14.68L8.00 14.70L8.44 14.68L8.87 14.59L9.26 14.34L9.53 13.70L9.72 13.05L9.97 12.76L10.26 12.58L10.55 12.42L10.84 12.25L11.14 12.09L11.52 12.01L12.17 12.17L12.86 12.26L13.28 12.05L13.56 11.72L13.80 11.35L14.00 10.96L14.14 10.54L14.12 10.08L13.70 9.53L13.23 9.04L13.11 8.67L13.10 8.33z" stroke="#ced0d6" stroke-width="1.05" stroke-linejoin="round"/><circle cx="8" cy="8" r="2.2" stroke="#ced0d6" stroke-width="1.05"/></svg>
<span class="t" style="left:2422.50px;top:316.00px;font-size:13.5px;color:#dfe1e5;letter-spacing:0.147px;">install</span>
<svg class="i" style="left:2403.00px;top:341.00px;" width="16" height="16" viewBox="0 0 16 16" fill="none"><path d="M13.10 8.00L13.10 7.67L13.11 7.33L13.23 6.96L13.70 6.47L14.12 5.92L14.14 5.46L14.00 5.04L13.80 4.65L13.56 4.28L13.28 3.95L12.86 3.74L12.17 3.83L11.52 3.99L11.14 3.91L10.84 3.75L10.55 3.58L10.26 3.42L9.97 3.24L9.72 2.95L9.53 2.30L9.26 1.66L8.87 1.41L8.44 1.32L8.00 1.30L7.56 1.32L7.13 1.41L6.74 1.66L6.47 2.30L6.28 2.95L6.03 3.24L5.74 3.42L5.45 3.58L5.16 3.75L4.86 3.91L4.48 3.99L3.83 3.83L3.14 3.74L2.72 3.95L2.44 4.28L2.20 4.65L2.00 5.04L1.86 5.46L1.88 5.92L2.30 6.47L2.77 6.96L2.89 7.33L2.90 7.67L2.90 8.00L2.90 8.33L2.89 8.67L2.77 9.04L2.30 9.53L1.88 10.08L1.86 10.54L2.00 10.96L2.20 11.35L2.44 11.72L2.72 12.05L3.14 12.26L3.83 12.17L4.48 12.01L4.86 12.09L5.16 12.25L5.45 12.42L5.74 12.58L6.03 12.76L6.28 13.05L6.47 13.70L6.74 14.34L7.13 14.59L7.56 14.68L8.00 14.70L8.44 14.68L8.87 14.59L9.26 14.34L9.53 13.70L9.72 13.05L9.97 12.76L10.26 12.58L10.55 12.42L10.84 12.25L11.14 12.09L11.52 12.01L12.17 12.17L12.86 12.26L13.28 12.05L13.56 11.72L13.80 11.35L14.00 10.96L14.14 10.54L14.12 10.08L13.70 9.53L13.23 9.04L13.11 8.67L13.10 8.33z" stroke="#ced0d6" stroke-width="1.05" stroke-linejoin="round"/><circle cx="8" cy="8" r="2.2" stroke="#ced0d6" stroke-width="1.05"/></svg>
<span class="t" style="left:2422.50px;top:340.00px;font-size:13.5px;color:#dfe1e5;letter-spacing:0.195px;">site</span>
<svg class="i" style="left:2403.00px;top:365.00px;" width="16" height="16" viewBox="0 0 16 16" fill="none"><path d="M13.10 8.00L13.10 7.67L13.11 7.33L13.23 6.96L13.70 6.47L14.12 5.92L14.14 5.46L14.00 5.04L13.80 4.65L13.56 4.28L13.28 3.95L12.86 3.74L12.17 3.83L11.52 3.99L11.14 3.91L10.84 3.75L10.55 3.58L10.26 3.42L9.97 3.24L9.72 2.95L9.53 2.30L9.26 1.66L8.87 1.41L8.44 1.32L8.00 1.30L7.56 1.32L7.13 1.41L6.74 1.66L6.47 2.30L6.28 2.95L6.03 3.24L5.74 3.42L5.45 3.58L5.16 3.75L4.86 3.91L4.48 3.99L3.83 3.83L3.14 3.74L2.72 3.95L2.44 4.28L2.20 4.65L2.00 5.04L1.86 5.46L1.88 5.92L2.30 6.47L2.77 6.96L2.89 7.33L2.90 7.67L2.90 8.00L2.90 8.33L2.89 8.67L2.77 9.04L2.30 9.53L1.88 10.08L1.86 10.54L2.00 10.96L2.20 11.35L2.44 11.72L2.72 12.05L3.14 12.26L3.83 12.17L4.48 12.01L4.86 12.09L5.16 12.25L5.45 12.42L5.74 12.58L6.03 12.76L6.28 13.05L6.47 13.70L6.74 14.34L7.13 14.59L7.56 14.68L8.00 14.70L8.44 14.68L8.87 14.59L9.26 14.34L9.53 13.70L9.72 13.05L9.97 12.76L10.26 12.58L10.55 12.42L10.84 12.25L11.14 12.09L11.52 12.01L12.17 12.17L12.86 12.26L13.28 12.05L13.56 11.72L13.80 11.35L14.00 10.96L14.14 10.54L14.12 10.08L13.70 9.53L13.23 9.04L13.11 8.67L13.10 8.33z" stroke="#ced0d6" stroke-width="1.05" stroke-linejoin="round"/><circle cx="8" cy="8" r="2.2" stroke="#ced0d6" stroke-width="1.05"/></svg>
<span class="t" style="left:2422.50px;top:364.00px;font-size:13.5px;color:#dfe1e5;letter-spacing:0.361px;">deploy</span>
<svg class="i" style="left:2364.00px;top:390.00px;" width="14" height="14" viewBox="0 0 16 16" fill="none"><path d="M5.8 3.5L10.3 8l-4.5 4.5" stroke="#b4b8bf" stroke-width="1.15"/></svg>
<svg class="i" style="left:2384.00px;top:389.00px;" width="16" height="16" viewBox="0 0 16 16" fill="none"><path d="M8 13.5H2.5a1 1 0 0 1-1-1v-9a1 1 0 0 1 1-1H5.6a1 1 0 0 1 .75.34L7.7 4.5h5.8a1 1 0 0 1 1 1v2.5" fill="#43454a" stroke="#ced0d6"/><circle cx="12" cy="12" r="4.700" fill="#2b2d30"/><path d="M14.90 12.00L14.90 11.70L14.99 11.36L15.37 10.91L15.37 10.50L15.20 10.15L14.98 9.83L14.63 9.63L14.05 9.73L13.71 9.64L13.45 9.49L13.18 9.34L12.94 9.09L12.74 8.53L12.39 8.33L12.00 8.30L11.61 8.33L11.26 8.53L11.06 9.09L10.82 9.34L10.55 9.49L10.29 9.64L9.95 9.73L9.37 9.63L9.02 9.83L8.80 10.15L8.63 10.50L8.63 10.91L9.01 11.36L9.10 11.70L9.10 12.00L9.10 12.30L9.01 12.64L8.63 13.09L8.63 13.50L8.80 13.85L9.02 14.17L9.37 14.37L9.95 14.27L10.29 14.36L10.55 14.51L10.82 14.66L11.06 14.91L11.26 15.47L11.61 15.67L12.00 15.70L12.39 15.67L12.74 15.47L12.94 14.91L13.18 14.66L13.45 14.51L13.71 14.36L14.05 14.27L14.63 14.37L14.98 14.17L15.20 13.85L15.37 13.50L15.37 13.09L14.99 12.64L14.90 12.30z" stroke="#548af7" fill="#25324d" stroke-width="1" stroke-linejoin="round"/><circle cx="12" cy="12" r="1.200" fill="#548af7"/></svg>
<span class="t" style="left:2403.40px;top:388.00px;font-size:13.5px;color:#dfe1e5;letter-spacing:-0.014px;">Plugins</span>
<svg class="i" style="left:2364.00px;top:414.00px;" width="14" height="14" viewBox="0 0 16 16" fill="none"><path d="M5.8 3.5L10.3 8l-4.5 4.5" stroke="#b4b8bf" stroke-width="1.15"/></svg>
<svg class="i" style="left:2384.00px;top:413.00px;" width="16" height="16" viewBox="0 0 16 16" fill="none"><path d="M8 13.5H2.5a1 1 0 0 1-1-1v-9a1 1 0 0 1 1-1H5.6a1 1 0 0 1 .75.34L7.7 4.5h5.8a1 1 0 0 1 1 1v2.5" fill="#43454a" stroke="#ced0d6"/><rect x="8" y="8" width="9" height="9" fill="#2b2d30"/><path d="M9.5 15.5v-4h2v4M11.5 15.5v-6h2v6M13.5 15.5v-3.5h2v3.5z" stroke="#548af7" fill="#25324d" stroke-width="1"/></svg>
<span class="t" style="left:2403.40px;top:412.00px;font-size:13.5px;color:#dfe1e5;letter-spacing:0.243px;">Dependencies</span>
<svg class="i" style="left:2364.00px;top:438.00px;" width="14" height="14" viewBox="0 0 16 16" fill="none"><path d="M5.8 3.5L10.3 8l-4.5 4.5" stroke="#b4b8bf" stroke-width="1.15"/></svg>
<svg class="i" style="left:2384.00px;top:437.00px;" width="16" height="16" viewBox="0 0 16 16" fill="none"><path d="M9 13.5H2.5a1 1 0 0 1-1-1v-9a1 1 0 0 1 1-1H5.6a1 1 0 0 1 .75.34L7.7 4.5h5.8a1 1 0 0 1 1 1v4" fill="#43454a" stroke="#ced0d6"/><path d="M10 13.2l1.8 1.8 3.6-4" stroke="#548af7" stroke-width="1.2"/></svg>
<span class="t" style="left:2404.00px;top:436.00px;font-size:13.5px;color:#dfe1e5;letter-spacing:0.214px;">Repositories</span>
<svg class="i" style="left:2530.00px;top:51.00px;" width="20" height="20" viewBox="0 0 20 20" fill="none"><g stroke="#ced0d6" stroke-width="1.350" stroke-linejoin="round"><path d="M10 1.800c-3 0-4.900 2.200-4.900 5v4.200l-2.200 3.600h14.200L14.900 11V6.800c0-2.800-1.900-5-4.900-5z"/><path d="M8.200 17.200a1.900 1.900 0 0 0 3.600 0" stroke-linecap="round"/></g></svg>
<div class="r" style="left:2542.900px;top:51.100px;width:7.200px;height:7.200px;border-radius:50%;background:#db5c5c;box-shadow:0 0 0 1.500px #2b2d30"></div>
<svg class="i" style="left:2531.00px;top:92.00px;" width="20" height="20" viewBox="0 0 20 20" fill="none"><g stroke="#ced0d6" stroke-width="1.300" stroke-linecap="round" stroke-linejoin="round"><path d="M5.200 15.200C2 13.600.5 9.800 2.200 6.200C4 2.400 9 1 12.600 3.200C14.200 4.200 15.300 5.600 15.800 7.200"/><path d="M6.600 12.600C4.600 11.400 4 8.800 5.200 6.800C6.600 4.600 9.600 4 11.700 5.500C12.400 6 12.900 6.600 13.200 7.300"/><path d="M8.600 10.200C7.700 9.600 7.500 8.500 8.100 7.700C8.700 7 9.700 6.900 10.500 7.400"/><path d="M10.400 9.400h7.600a1 1 0 0 1 1 1v4.800a1 1 0 0 1-1 1h-7.600a1 1 0 0 1-1-1v-4.800a1 1 0 0 1 1-1z" fill="#2b2d30"/><path d="M18.800 16v2.800l-3.300-2.600"/></g></svg>
<div class="r" style="left:2525px;top:126px;width:30px;height:30px;border-radius:6px;background:#43454a"></div>
<span class="t" style="left:2531.00px;top:131.00px;font-size:22.5px;color:#ced0d6;letter-spacing:-0.250px;font-style:italic;">m</span>
<div class="r" style="left:13.700px;top:1373px;width:8.300px;height:8.300px;box-sizing:border-box;border:1.600px solid #548af7;border-radius:2px"></div>
<span class="t" style="left:26.90px;top:1366.70px;font-size:13.5px;color:#a8adb5;letter-spacing:0.245px;">TestPlugin</span>
<span class="t" style="left:116.20px;top:1366.70px;font-size:13.5px;color:#a8adb5;letter-spacing:0.400px;">src</span>
<span class="t" style="left:159.20px;top:1366.70px;font-size:13.4px;color:#a8adb5;letter-spacing:-0.377px;">main</span>
<span class="t" style="left:211.60px;top:1366.70px;font-size:13.5px;color:#a8adb5;letter-spacing:-0.189px;">java</span>
<span class="t" style="left:260.30px;top:1366.70px;font-size:13.5px;color:#a8adb5;letter-spacing:-0.116px;">nl</span>
<span class="t" style="left:295.30px;top:1366.70px;font-size:13.5px;color:#a8adb5;letter-spacing:0.241px;">stevensmax</span>
<span class="t" style="left:394.00px;top:1366.70px;font-size:13.5px;color:#a8adb5;letter-spacing:0.323px;">testPlugin</span>
<span class="t" style="left:481.00px;top:1366.70px;font-size:13.5px;color:#a8adb5;letter-spacing:0.504px;">events</span>
<svg class="i" style="left:97.00px;top:1370.30px;" width="13" height="13" viewBox="0 0 16 16" fill="none"><path d="M5.8 3.5L10.3 8l-4.5 4.5" stroke="#a8adb5" stroke-width="1.15"/></svg>
<svg class="i" style="left:140.30px;top:1370.30px;" width="13" height="13" viewBox="0 0 16 16" fill="none"><path d="M5.8 3.5L10.3 8l-4.5 4.5" stroke="#a8adb5" stroke-width="1.15"/></svg>
<svg class="i" style="left:193.00px;top:1370.30px;" width="13" height="13" viewBox="0 0 16 16" fill="none"><path d="M5.8 3.5L10.3 8l-4.5 4.5" stroke="#a8adb5" stroke-width="1.15"/></svg>
<svg class="i" style="left:241.50px;top:1370.30px;" width="13" height="13" viewBox="0 0 16 16" fill="none"><path d="M5.8 3.5L10.3 8l-4.5 4.5" stroke="#a8adb5" stroke-width="1.15"/></svg>
<svg class="i" style="left:276.30px;top:1370.30px;" width="13" height="13" viewBox="0 0 16 16" fill="none"><path d="M5.8 3.5L10.3 8l-4.5 4.5" stroke="#a8adb5" stroke-width="1.15"/></svg>
<svg class="i" style="left:375.50px;top:1370.30px;" width="13" height="13" viewBox="0 0 16 16" fill="none"><path d="M5.8 3.5L10.3 8l-4.5 4.5" stroke="#a8adb5" stroke-width="1.15"/></svg>
<svg class="i" style="left:462.10px;top:1370.30px;" width="13" height="13" viewBox="0 0 16 16" fill="none"><path d="M5.8 3.5L10.3 8l-4.5 4.5" stroke="#a8adb5" stroke-width="1.15"/></svg>
<svg class="i" style="left:528.90px;top:1370.30px;" width="13" height="13" viewBox="0 0 16 16" fill="none"><path d="M5.8 3.5L10.3 8l-4.5 4.5" stroke="#a8adb5" stroke-width="1.15"/></svg>
<svg class="i" style="left:548.25px;top:1369.05px;" width="15.5" height="15.5" viewBox="0 0 16 16" fill="none"><circle cx="8" cy="8" r="6.5" fill="#25324d" stroke="#548af7"/><path d="M10.3 6.2a2.9 2.9 0 1 0 0 3.6" stroke="#548af7" stroke-width="1.15"/></svg>
<span class="t" style="left:568.40px;top:1366.70px;font-size:13.5px;color:#a8adb5;letter-spacing:0.422px;">ToggleListener</span>
<span class="t" style="left:2287.40px;top:1366.70px;font-size:13.5px;color:#a8adb5;letter-spacing:0.173px;">4:47</span>
<span class="t" style="left:2330.20px;top:1366.70px;font-size:12.2px;color:#a8adb5;letter-spacing:-0.343px;">CRLF</span>
<span class="t" style="left:2378.00px;top:1366.70px;font-size:13.5px;color:#a8adb5;letter-spacing:0.288px;">UTF-8</span>
<svg class="i" style="left:2435.70px;top:1369.30px;" width="16" height="16" viewBox="0 0 16 16" fill="none"><path d="M7 14.500H3.500a1 1 0 0 1-1-1v-10a1 1 0 0 1 1-1H8.500l3 3V7" stroke="#b4b8bf" stroke-width="1.100" stroke-linejoin="round"/><path d="M8.500 2.500v3h3" stroke="#b4b8bf" stroke-width="1" opacity=".7"/><g transform="translate(5.900 7.200) scale(.56)"><path d="M13.10 8.00L13.10 7.67L13.11 7.33L13.23 6.96L13.70 6.47L14.12 5.92L14.14 5.46L14.00 5.04L13.80 4.65L13.56 4.28L13.28 3.95L12.86 3.74L12.17 3.83L11.52 3.99L11.14 3.91L10.84 3.75L10.55 3.58L10.26 3.42L9.97 3.24L9.72 2.95L9.53 2.30L9.26 1.66L8.87 1.41L8.44 1.32L8.00 1.30L7.56 1.32L7.13 1.41L6.74 1.66L6.47 2.30L6.28 2.95L6.03 3.24L5.74 3.42L5.45 3.58L5.16 3.75L4.86 3.91L4.48 3.99L3.83 3.83L3.14 3.74L2.72 3.95L2.44 4.28L2.20 4.65L2.00 5.04L1.86 5.46L1.88 5.92L2.30 6.47L2.77 6.96L2.89 7.33L2.90 7.67L2.90 8.00L2.90 8.33L2.89 8.67L2.77 9.04L2.30 9.53L1.88 10.08L1.86 10.54L2.00 10.96L2.20 11.35L2.44 11.72L2.72 12.05L3.14 12.26L3.83 12.17L4.48 12.01L4.86 12.09L5.16 12.25L5.45 12.42L5.74 12.58L6.03 12.76L6.28 13.05L6.47 13.70L6.74 14.34L7.13 14.59L7.56 14.68L8.00 14.70L8.44 14.68L8.87 14.59L9.26 14.34L9.53 13.70L9.72 13.05L9.97 12.76L10.26 12.58L10.55 12.42L10.84 12.25L11.14 12.09L11.52 12.01L12.17 12.17L12.86 12.26L13.28 12.05L13.56 11.72L13.80 11.35L14.00 10.96L14.14 10.54L14.12 10.08L13.70 9.53L13.23 9.04L13.11 8.67L13.10 8.33z" stroke="#b4b8bf" stroke-width="1.700" fill="#2b2d30"/><circle cx="8" cy="8" r="1.800" fill="#b4b8bf"/></g></svg>
<span class="t" style="left:2454.50px;top:1366.70px;font-size:13.5px;color:#a8adb5;letter-spacing:0.179px;">4 spaces</span>
<svg class="i" style="left:2527.50px;top:1369.00px;" width="16" height="16" viewBox="0 0 16 16" fill="none"><rect x="2" y="7" width="9.500" height="7" rx="1.300" stroke="#b4b8bf" stroke-width="1.200"/><path d="M9.500 7v-2.500a2.400 2.400 0 0 1 4.800 0v1.200" stroke="#b4b8bf" stroke-width="1.200"/><rect x="5.700" y="9.600" width="2.200" height="2" fill="#b4b8bf"/></svg>
<div class="r" style="left:342px;top:142px;width:1990px;height:20px;background:#26282e;"></div>
<div class="r" style="left:416px;top:82px;width:1px;height:1280px;background:#313438;"></div>
<div class="r" style="left:1259px;top:82px;width:1px;height:1280px;background:#313438;"></div>
<div class="r" style="left:445px;top:582px;width:1px;height:520px;background:#313438;"></div>
<div class="r" style="left:473px;top:642px;width:1px;height:440px;background:#313438;"></div>
<div class="r" style="left:501px;top:662px;width:1px;height:160px;background:#313438;"></div>
<div class="r" style="left:529px;top:742px;width:1px;height:20px;background:#313438;"></div>
<div class="r" style="left:529px;top:782px;width:1px;height:20px;background:#313438;"></div>
<div class="r" style="left:501px;top:842px;width:1px;height:220px;background:#313438;"></div>
<div class="r" style="left:529px;top:862px;width:1px;height:180px;background:#313438;"></div>
<div class="r" style="left:557px;top:882px;width:1px;height:40px;background:#313438;"></div>
<div class="r" style="left:557px;top:942px;width:1px;height:40px;background:#313438;"></div>
<div class="r" style="left:445px;top:1182px;width:1px;height:120px;background:#313438;"></div>
<div class="r" style="left:473px;top:1242px;width:1px;height:40px;background:#313438;"></div>
<div class="ln" style="top:83px;color:#4b5059">1</div>
<div class="code" style="top:83px"><span class="k">package</span> nl.stevensmax.testPlugin.events;</div>
<div class="ln" style="top:103px;color:#4b5059">2</div>
<div class="ln" style="top:123px;color:#4b5059">3</div>
<div class="code" style="top:123px"><span class="k">import</span> net.md_5.bungee.api.ChatMessageType;</div>
<div class="ln" style="top:143px;color:#a1a3ab">4</div>
<div class="code" style="top:143px"><span class="k">import</span> net.md_5.bungee.api.chat.TextComponent;</div>
<div class="ln" style="top:163px;color:#4b5059">5</div>
<div class="code" style="top:163px"><span class="k">import</span> org.bukkit.Material;</div>
<div class="ln" style="top:183px;color:#4b5059">6</div>
<div class="code" style="top:183px"><span class="k">import</span> org.bukkit.entity.Player;</div>
<div class="ln" style="top:203px;color:#4b5059">7</div>
<div class="code" style="top:203px"><span class="k">import</span> org.bukkit.event.<span class="a">EventHandler</span>;</div>
<div class="ln" style="top:223px;color:#4b5059">8</div>
<div class="code" style="top:223px"><span class="k">import</span> org.bukkit.event.Listener;</div>
<div class="ln" style="top:243px;color:#4b5059">9</div>
<div class="code" style="top:243px"><span class="k">import</span> org.bukkit.event.player.AsyncPlayerChatEvent;</div>
<div class="ln" style="top:263px;color:#4b5059">10</div>
<div class="code" style="top:263px"><span class="k">import</span> org.bukkit.event.player.PlayerInteractEvent;</div>
<div class="ln" style="top:283px;color:#4b5059">11</div>
<div class="code" style="top:283px"><span class="k">import</span> org.bukkit.inventory.EquipmentSlot;</div>
<div class="ln" style="top:303px;color:#4b5059">12</div>
<div class="ln" style="top:323px;color:#4b5059">13</div>
<div class="code" style="top:323px"><span class="k">import</span> java.util.ArrayList;</div>
<div class="ln" style="top:343px;color:#4b5059">14</div>
<div class="code" style="top:343px"><span class="k">import</span> java.util.HashMap;</div>
<div class="ln" style="top:363px;color:#4b5059">15</div>
<div class="code" style="top:363px"><span class="k">import</span> java.util.List;</div>
<div class="ln" style="top:383px;color:#4b5059">16</div>
<div class="code" style="top:383px"><span class="k">import</span> java.util.UUID;</div>
<div class="ln" style="top:403px;color:#4b5059">17</div>
<div class="ln" style="top:423px;color:#4b5059">18</div>
<div class="code" style="top:423px"><span class="k">public class</span> ToggleListener <span class="k">implements</span> Listener {<span class="h" style="padding-left:12px">2 usages</span></div>
<div class="ln" style="top:443px;color:#4b5059">19</div>
<div class="ln" style="top:463px;color:#4b5059">20</div>
<div class="code" style="top:463px">    <span class="k">private final</span> List&lt;UUID&gt; <span class="f">enabled</span> = <span class="k">new</span> ArrayList&lt;&gt;();<span class="h" style="padding-left:12px">4 usages</span></div>
<div class="ln" style="top:483px;color:#4b5059">21</div>
<div class="code" style="top:483px">    <span class="k">private final</span> HashMap&lt;UUID, Long&gt; <span class="f">cooldowns</span> = <span class="k">new</span> HashMap&lt;&gt;();<span class="h" style="padding-left:12px">4 usages</span></div>
<div class="ln" style="top:503px;color:#4b5059">22</div>
<div class="code" style="top:503px">    <span class="k">private int</span> <span class="w"><span class="f">cooldownTime</span></span> = <span class="n">10</span>;<span class="h" style="padding-left:12px">1 usage</span></div>
<div class="ln" style="top:523px;color:#4b5059">23</div>
<div class="ln" style="top:543px;color:#4b5059">24</div>
<div class="code" style="top:543px">    <span class="a">@EventHandler</span></div>
<div class="ln" style="top:563px;color:#4b5059">25</div>
<div class="code" style="top:563px">    <span class="k">public void</span> <span class="m">onPlayerInteract</span>(PlayerInteractEvent e) {</div>
<div class="ln" style="top:583px;color:#4b5059">26</div>
<div class="code" style="top:583px">        Player player = (<span class="g">Player</span>) e.getPlayer();</div>
<div class="ln" style="top:603px;color:#4b5059">27</div>
<div class="ln" style="top:623px;color:#4b5059">28</div>
<div class="code" style="top:623px">        <span class="k">if</span> (e.getHand().<span class="w">equals</span>(EquipmentSlot.<span class="sf">HAND</span>)) {</div>
<div class="ln" style="top:643px;color:#4b5059">29</div>
<div class="code" style="top:643px">            <span class="k">if</span> (<span class="f">cooldowns</span>.containsKey(player.getUniqueId())) {</div>
<div class="ln" style="top:663px;color:#4b5059">30</div>
<div class="code" style="top:663px">                <span class="k">long</span> lastUse = <span class="f">cooldowns</span>.get(player.getUniqueId());</div>
<div class="ln" style="top:683px;color:#4b5059">31</div>
<div class="code" style="top:683px">                <span class="k">long</span> secondsLeft = ((lastUse / <span class="n">1000</span>) + <span class="f">cooldownTime</span>) - (System.<span class="sm">currentTimeMillis</span>() / <span class="n">1000</span>);</div>
<div class="ln" style="top:703px;color:#4b5059">32</div>
<div class="ln" style="top:723px;color:#4b5059">33</div>
<div class="code" style="top:723px">                <span class="k">if</span> (secondsLeft &gt; <span class="n">0</span>) {</div>
<div class="ln" style="top:743px;color:#4b5059">34</div>
<div class="code" style="top:743px">                    player.spigot().sendMessage(ChatMessageType.<span class="sf">ACTION_BAR</span>, TextComponent.<span class="sm">fromLegacy</span>(<span class="s">"§4§l[COOLDOWN] §r§cYou must wait "</span> + secondsLeft + <span class="s">" seconds before you can do this again."</span>));</div>
<div class="ln" style="top:763px;color:#4b5059">35</div>
<div class="code" style="top:763px">                } <span class="k">else</span> {</div>
<div class="ln" style="top:783px;color:#4b5059">36</div>
<div class="code" style="top:783px">                    <span class="f">cooldowns</span>.remove(player.getUniqueId());</div>
<div class="ln" style="top:803px;color:#4b5059">37</div>
<div class="code" style="top:803px">                }</div>
<div class="ln" style="top:823px;color:#4b5059">38</div>
<div class="code" style="top:823px">            } <span class="k">else</span> {</div>
<div class="ln" style="top:843px;color:#4b5059">39</div>
<div class="code" style="top:843px">                <span class="k">if</span> (<span class="w">player.getInventory().getItemInMainHand() != <span class="k">null</span></span> &amp;&amp; player.getInventory().getItemInMainHand().getType().equals(Material.<span class="sf">NETHER_STAR</span>)) {</div>
<div class="ln" style="top:863px;color:#4b5059">40</div>
<div class="code" style="top:863px">                    <span class="k">if</span> (<span class="f">enabled</span>.contains(player.getUniqueId())) {</div>
<div class="ln" style="top:883px;color:#4b5059">41</div>
<div class="code" style="top:883px">                        <span class="f">enabled</span>.remove(player.getUniqueId());</div>
<div class="ln" style="top:903px;color:#4b5059">42</div>
<div class="code" style="top:903px">                        player.spigot().sendMessage(ChatMessageType.<span class="sf">ACTION_BAR</span>, TextComponent.<span class="sm">fromLegacy</span>(<span class="s">"§a You've enabled the chat!"</span>));</div>
<div class="ln" style="top:923px;color:#4b5059">43</div>
<div class="code" style="top:923px">                    } <span class="k">else</span> {</div>
<div class="ln" style="top:943px;color:#4b5059">44</div>
<div class="code" style="top:943px">                        <span class="f">enabled</span>.add(player.getUniqueId());</div>
<div class="ln" style="top:963px;color:#4b5059">45</div>
<div class="code" style="top:963px">                        player.spigot().sendMessage(ChatMessageType.<span class="sf">ACTION_BAR</span>, TextComponent.<span class="sm">fromLegacy</span>(<span class="s">"§e You've disabled the chat!"</span>));</div>
<div class="ln" style="top:983px;color:#4b5059">46</div>
<div class="code" style="top:983px">                    }</div>
<div class="ln" style="top:1003px;color:#4b5059">47</div>
<div class="ln" style="top:1023px;color:#4b5059">48</div>
<div class="code" style="top:1023px">                    <span class="f">cooldowns</span>.put(player.getUniqueId(), System.<span class="sm">currentTimeMillis</span>());</div>
<div class="ln" style="top:1043px;color:#4b5059">49</div>
<div class="code" style="top:1043px">                }</div>
<div class="ln" style="top:1063px;color:#4b5059">50</div>
<div class="code" style="top:1063px">            }</div>
<div class="ln" style="top:1083px;color:#4b5059">51</div>
<div class="code" style="top:1083px">        }</div>
<div class="ln" style="top:1103px;color:#4b5059">52</div>
<div class="code" style="top:1103px">    }</div>
<div class="ln" style="top:1123px;color:#4b5059">53</div>
<div class="ln" style="top:1143px;color:#4b5059">54</div>
<div class="code" style="top:1143px">    <span class="a">@EventHandler</span></div>
<div class="ln" style="top:1163px;color:#4b5059">55</div>
<div class="code" style="top:1163px">    <span class="k">public void</span> <span class="m">onChat</span>(AsyncPlayerChatEvent e) {</div>
<div class="ln" style="top:1183px;color:#4b5059">56</div>
<div class="code" style="top:1183px">        Player player = (<span class="g">Player</span>) e.getPlayer();</div>
<div class="ln" style="top:1203px;color:#4b5059">57</div>
<div class="ln" style="top:1223px;color:#4b5059">58</div>
<div class="code" style="top:1223px">        <span class="k">if</span> (<span class="f">enabled</span>.contains(player.getUniqueId())) {</div>
<div class="ln" style="top:1243px;color:#4b5059">59</div>
<div class="code" style="top:1243px">            e.setCancelled(<span class="k">true</span>);</div>
<div class="ln" style="top:1263px;color:#4b5059">60</div>
<div class="code" style="top:1263px">            player.spigot().sendMessage(ChatMessageType.<span class="sf">ACTION_BAR</span>, TextComponent.<span class="sm">fromLegacy</span>(<span class="s">"§c You've disabled the chat. Please interact with the nether star to enabled it."</span>));</div>
<div class="ln" style="top:1283px;color:#4b5059">61</div>
<div class="code" style="top:1283px">        }</div>
<div class="ln" style="top:1303px;color:#4b5059">62</div>
<div class="code" style="top:1303px">    }</div>
<div class="ln" style="top:1323px;color:#4b5059">63</div>
<div class="ln" style="top:1343px;color:#4b5059">64</div>
<div class="code" style="top:1343px">}</div>
<svg class="i" style="left:531px;top:518px" width="84" height="3" viewBox="0 0 84 3" shape-rendering="crispEdges"><path d="M0 2h1v1h-1zM1 1h1v1h-1zM2 0h1v1h-1zM3 1h1v1h-1zM4 2h1v1h-1zM5 1h1v1h-1zM6 0h1v1h-1zM7 1h1v1h-1zM8 2h1v1h-1zM9 1h1v1h-1zM10 0h1v1h-1zM11 1h1v1h-1zM12 2h1v1h-1zM13 1h1v1h-1zM14 0h1v1h-1zM15 1h1v1h-1zM16 2h1v1h-1zM17 1h1v1h-1zM18 0h1v1h-1zM19 1h1v1h-1zM20 2h1v1h-1zM21 1h1v1h-1zM22 0h1v1h-1zM23 1h1v1h-1zM24 2h1v1h-1zM25 1h1v1h-1zM26 0h1v1h-1zM27 1h1v1h-1zM28 2h1v1h-1zM29 1h1v1h-1zM30 0h1v1h-1zM31 1h1v1h-1zM32 2h1v1h-1zM33 1h1v1h-1zM34 0h1v1h-1zM35 1h1v1h-1zM36 2h1v1h-1zM37 1h1v1h-1zM38 0h1v1h-1zM39 1h1v1h-1zM40 2h1v1h-1zM41 1h1v1h-1zM42 0h1v1h-1zM43 1h1v1h-1zM44 2h1v1h-1zM45 1h1v1h-1zM46 0h1v1h-1zM47 1h1v1h-1zM48 2h1v1h-1zM49 1h1v1h-1zM50 0h1v1h-1zM51 1h1v1h-1zM52 2h1v1h-1zM53 1h1v1h-1zM54 0h1v1h-1zM55 1h1v1h-1zM56 2h1v1h-1zM57 1h1v1h-1zM58 0h1v1h-1zM59 1h1v1h-1zM60 2h1v1h-1zM61 1h1v1h-1zM62 0h1v1h-1zM63 1h1v1h-1zM64 2h1v1h-1zM65 1h1v1h-1zM66 0h1v1h-1zM67 1h1v1h-1zM68 2h1v1h-1zM69 1h1v1h-1zM70 0h1v1h-1zM71 1h1v1h-1zM72 2h1v1h-1zM73 1h1v1h-1zM74 0h1v1h-1zM75 1h1v1h-1zM76 2h1v1h-1zM77 1h1v1h-1zM78 0h1v1h-1zM79 1h1v1h-1zM80 2h1v1h-1zM81 1h1v1h-1zM82 0h1v1h-1zM83 1h1v1h-1z" fill="#d6ae58"/></svg>
<svg class="i" style="left:587px;top:638px" width="42" height="3" viewBox="0 0 42 3" shape-rendering="crispEdges"><path d="M0 2h1v1h-1zM1 1h1v1h-1zM2 0h1v1h-1zM3 1h1v1h-1zM4 2h1v1h-1zM5 1h1v1h-1zM6 0h1v1h-1zM7 1h1v1h-1zM8 2h1v1h-1zM9 1h1v1h-1zM10 0h1v1h-1zM11 1h1v1h-1zM12 2h1v1h-1zM13 1h1v1h-1zM14 0h1v1h-1zM15 1h1v1h-1zM16 2h1v1h-1zM17 1h1v1h-1zM18 0h1v1h-1zM19 1h1v1h-1zM20 2h1v1h-1zM21 1h1v1h-1zM22 0h1v1h-1zM23 1h1v1h-1zM24 2h1v1h-1zM25 1h1v1h-1zM26 0h1v1h-1zM27 1h1v1h-1zM28 2h1v1h-1zM29 1h1v1h-1zM30 0h1v1h-1zM31 1h1v1h-1zM32 2h1v1h-1zM33 1h1v1h-1zM34 0h1v1h-1zM35 1h1v1h-1zM36 2h1v1h-1zM37 1h1v1h-1zM38 0h1v1h-1zM39 1h1v1h-1zM40 2h1v1h-1zM41 1h1v1h-1z" fill="#d6ae58"/></svg>
<svg class="i" style="left:559px;top:858px" width="343" height="3" viewBox="0 0 343 3" shape-rendering="crispEdges"><path d="M0 2h1v1h-1zM1 1h1v1h-1zM2 0h1v1h-1zM3 1h1v1h-1zM4 2h1v1h-1zM5 1h1v1h-1zM6 0h1v1h-1zM7 1h1v1h-1zM8 2h1v1h-1zM9 1h1v1h-1zM10 0h1v1h-1zM11 1h1v1h-1zM12 2h1v1h-1zM13 1h1v1h-1zM14 0h1v1h-1zM15 1h1v1h-1zM16 2h1v1h-1zM17 1h1v1h-1zM18 0h1v1h-1zM19 1h1v1h-1zM20 2h1v1h-1zM21 1h1v1h-1zM22 0h1v1h-1zM23 1h1v1h-1zM24 2h1v1h-1zM25 1h1v1h-1zM26 0h1v1h-1zM27 1h1v1h-1zM28 2h1v1h-1zM29 1h1v1h-1zM30 0h1v1h-1zM31 1h1v1h-1zM32 2h1v1h-1zM33 1h1v1h-1zM34 0h1v1h-1zM35 1h1v1h-1zM36 2h1v1h-1zM37 1h1v1h-1zM38 0h1v1h-1zM39 1h1v1h-1zM40 2h1v1h-1zM41 1h1v1h-1zM42 0h1v1h-1zM43 1h1v1h-1zM44 2h1v1h-1zM45 1h1v1h-1zM46 0h1v1h-1zM47 1h1v1h-1zM48 2h1v1h-1zM49 1h1v1h-1zM50 0h1v1h-1zM51 1h1v1h-1zM52 2h1v1h-1zM53 1h1v1h-1zM54 0h1v1h-1zM55 1h1v1h-1zM56 2h1v1h-1zM57 1h1v1h-1zM58 0h1v1h-1zM59 1h1v1h-1zM60 2h1v1h-1zM61 1h1v1h-1zM62 0h1v1h-1zM63 1h1v1h-1zM64 2h1v1h-1zM65 1h1v1h-1zM66 0h1v1h-1zM67 1h1v1h-1zM68 2h1v1h-1zM69 1h1v1h-1zM70 0h1v1h-1zM71 1h1v1h-1zM72 2h1v1h-1zM73 1h1v1h-1zM74 0h1v1h-1zM75 1h1v1h-1zM76 2h1v1h-1zM77 1h1v1h-1zM78 0h1v1h-1zM79 1h1v1h-1zM80 2h1v1h-1zM81 1h1v1h-1zM82 0h1v1h-1zM83 1h1v1h-1zM84 2h1v1h-1zM85 1h1v1h-1zM86 0h1v1h-1zM87 1h1v1h-1zM88 2h1v1h-1zM89 1h1v1h-1zM90 0h1v1h-1zM91 1h1v1h-1zM92 2h1v1h-1zM93 1h1v1h-1zM94 0h1v1h-1zM95 1h1v1h-1zM96 2h1v1h-1zM97 1h1v1h-1zM98 0h1v1h-1zM99 1h1v1h-1zM100 2h1v1h-1zM101 1h1v1h-1zM102 0h1v1h-1zM103 1h1v1h-1zM104 2h1v1h-1zM105 1h1v1h-1zM106 0h1v1h-1zM107 1h1v1h-1zM108 2h1v1h-1zM109 1h1v1h-1zM110 0h1v1h-1zM111 1h1v1h-1zM112 2h1v1h-1zM113 1h1v1h-1zM114 0h1v1h-1zM115 1h1v1h-1zM116 2h1v1h-1zM117 1h1v1h-1zM118 0h1v1h-1zM119 1h1v1h-1zM120 2h1v1h-1zM121 1h1v1h-1zM122 0h1v1h-1zM123 1h1v1h-1zM124 2h1v1h-1zM125 1h1v1h-1zM126 0h1v1h-1zM127 1h1v1h-1zM128 2h1v1h-1zM129 1h1v1h-1zM130 0h1v1h-1zM131 1h1v1h-1zM132 2h1v1h-1zM133 1h1v1h-1zM134 0h1v1h-1zM135 1h1v1h-1zM136 2h1v1h-1zM137 1h1v1h-1zM138 0h1v1h-1zM139 1h1v1h-1zM140 2h1v1h-1zM141 1h1v1h-1zM142 0h1v1h-1zM143 1h1v1h-1zM144 2h1v1h-1zM145 1h1v1h-1zM146 0h1v1h-1zM147 1h1v1h-1zM148 2h1v1h-1zM149 1h1v1h-1zM150 0h1v1h-1zM151 1h1v1h-1zM152 2h1v1h-1zM153 1h1v1h-1zM154 0h1v1h-1zM155 1h1v1h-1zM156 2h1v1h-1zM157 1h1v1h-1zM158 0h1v1h-1zM159 1h1v1h-1zM160 2h1v1h-1zM161 1h1v1h-1zM162 0h1v1h-1zM163 1h1v1h-1zM164 2h1v1h-1zM165 1h1v1h-1zM166 0h1v1h-1zM167 1h1v1h-1zM168 2h1v1h-1zM169 1h1v1h-1zM170 0h1v1h-1zM171 1h1v1h-1zM172 2h1v1h-1zM173 1h1v1h-1zM174 0h1v1h-1zM175 1h1v1h-1zM176 2h1v1h-1zM177 1h1v1h-1zM178 0h1v1h-1zM179 1h1v1h-1zM180 2h1v1h-1zM181 1h1v1h-1zM182 0h1v1h-1zM183 1h1v1h-1zM184 2h1v1h-1zM185 1h1v1h-1zM186 0h1v1h-1zM187 1h1v1h-1zM188 2h1v1h-1zM189 1h1v1h-1zM190 0h1v1h-1zM191 1h1v1h-1zM192 2h1v1h-1zM193 1h1v1h-1zM194 0h1v1h-1zM195 1h1v1h-1zM196 2h1v1h-1zM197 1h1v1h-1zM198 0h1v1h-1zM199 1h1v1h-1zM200 2h1v1h-1zM201 1h1v1h-1zM202 0h1v1h-1zM203 1h1v1h-1zM204 2h1v1h-1zM205 1h1v1h-1zM206 0h1v1h-1zM207 1h1v1h-1zM208 2h1v1h-1zM209 1h1v1h-1zM210 0h1v1h-1zM211 1h1v1h-1zM212 2h1v1h-1zM213 1h1v1h-1zM214 0h1v1h-1zM215 1h1v1h-1zM216 2h1v1h-1zM217 1h1v1h-1zM218 0h1v1h-1zM219 1h1v1h-1zM220 2h1v1h-1zM221 1h1v1h-1zM222 0h1v1h-1zM223 1h1v1h-1zM224 2h1v1h-1zM225 1h1v1h-1zM226 0h1v1h-1zM227 1h1v1h-1zM228 2h1v1h-1zM229 1h1v1h-1zM230 0h1v1h-1zM231 1h1v1h-1zM232 2h1v1h-1zM233 1h1v1h-1zM234 0h1v1h-1zM235 1h1v1h-1zM236 2h1v1h-1zM237 1h1v1h-1zM238 0h1v1h-1zM239 1h1v1h-1zM240 2h1v1h-1zM241 1h1v1h-1zM242 0h1v1h-1zM243 1h1v1h-1zM244 2h1v1h-1zM245 1h1v1h-1zM246 0h1v1h-1zM247 1h1v1h-1zM248 2h1v1h-1zM249 1h1v1h-1zM250 0h1v1h-1zM251 1h1v1h-1zM252 2h1v1h-1zM253 1h1v1h-1zM254 0h1v1h-1zM255 1h1v1h-1zM256 2h1v1h-1zM257 1h1v1h-1zM258 0h1v1h-1zM259 1h1v1h-1zM260 2h1v1h-1zM261 1h1v1h-1zM262 0h1v1h-1zM263 1h1v1h-1zM264 2h1v1h-1zM265 1h1v1h-1zM266 0h1v1h-1zM267 1h1v1h-1zM268 2h1v1h-1zM269 1h1v1h-1zM270 0h1v1h-1zM271 1h1v1h-1zM272 2h1v1h-1zM273 1h1v1h-1zM274 0h1v1h-1zM275 1h1v1h-1zM276 2h1v1h-1zM277 1h1v1h-1zM278 0h1v1h-1zM279 1h1v1h-1zM280 2h1v1h-1zM281 1h1v1h-1zM282 0h1v1h-1zM283 1h1v1h-1zM284 2h1v1h-1zM285 1h1v1h-1zM286 0h1v1h-1zM287 1h1v1h-1zM288 2h1v1h-1zM289 1h1v1h-1zM290 0h1v1h-1zM291 1h1v1h-1zM292 2h1v1h-1zM293 1h1v1h-1zM294 0h1v1h-1zM295 1h1v1h-1zM296 2h1v1h-1zM297 1h1v1h-1zM298 0h1v1h-1zM299 1h1v1h-1zM300 2h1v1h-1zM301 1h1v1h-1zM302 0h1v1h-1zM303 1h1v1h-1zM304 2h1v1h-1zM305 1h1v1h-1zM306 0h1v1h-1zM307 1h1v1h-1zM308 2h1v1h-1zM309 1h1v1h-1zM310 0h1v1h-1zM311 1h1v1h-1zM312 2h1v1h-1zM313 1h1v1h-1zM314 0h1v1h-1zM315 1h1v1h-1zM316 2h1v1h-1zM317 1h1v1h-1zM318 0h1v1h-1zM319 1h1v1h-1zM320 2h1v1h-1zM321 1h1v1h-1zM322 0h1v1h-1zM323 1h1v1h-1zM324 2h1v1h-1zM325 1h1v1h-1zM326 0h1v1h-1zM327 1h1v1h-1zM328 2h1v1h-1zM329 1h1v1h-1zM330 0h1v1h-1zM331 1h1v1h-1zM332 2h1v1h-1zM333 1h1v1h-1zM334 0h1v1h-1zM335 1h1v1h-1zM336 2h1v1h-1zM337 1h1v1h-1zM338 0h1v1h-1zM339 1h1v1h-1zM340 2h1v1h-1zM341 1h1v1h-1zM342 0h1v1h-1z" fill="#d6ae58"/></svg>
<svg class="i" style="left:367.00px;top:565.00px;" width="14" height="14" viewBox="0 0 14 14" fill="none"><path d="M2.300 9.600V7.300a4.700 4.700 0 0 1 9.400 0v2.300" stroke="#58c0f5" stroke-width="2.100"/><path d="M9.800 4.800L4.400 9.900H7L5.200 13.400L10.400 8H7.900z" fill="#f5b14a"/></svg>
<svg class="i" style="left:382.90px;top:564.90px;" width="14.2" height="14.2" viewBox="0 0 16 16" fill="none"><g stroke="#ced0d6" stroke-width="1.150" stroke-linecap="round"><path d="M11.500 14a7 7 0 1 1 3.500-6c0 1.800-.8 2.800-2 2.800-1 0-1.700-.7-1.700-1.800v-3.500"/><circle cx="8.300" cy="8" r="2.900"/></g></svg>
<svg class="i" style="left:367.00px;top:1165.00px;" width="14" height="14" viewBox="0 0 14 14" fill="none"><path d="M2.300 9.600V7.300a4.700 4.700 0 0 1 9.400 0v2.300" stroke="#58c0f5" stroke-width="2.100"/><path d="M9.800 4.800L4.400 9.900H7L5.200 13.400L10.400 8H7.900z" fill="#f5b14a"/></svg>
<svg class="i" style="left:382.90px;top:1164.90px;" width="14.2" height="14.2" viewBox="0 0 16 16" fill="none"><g stroke="#ced0d6" stroke-width="1.150" stroke-linecap="round"><path d="M11.500 14a7 7 0 1 1 3.500-6c0 1.800-.8 2.800-2 2.800-1 0-1.700-.7-1.700-1.800v-3.500"/><circle cx="8.300" cy="8" r="2.900"/></g></svg>
<div class="r" style="left:2317px;top:484px;width:14px;height:2px;background:#cba548;"></div>
<div class="r" style="left:2317px;top:591px;width:14px;height:2px;background:#cba548;"></div>
<div class="r" style="left:2317px;top:788px;width:14px;height:2px;background:#cba548;"></div>
<div class="r" style="left:2322px;top:109px;width:8px;height:1144px;background:rgba(255,255,255,0.173);"></div>
<svg class="i" style="left:2259.35px;top:88.00px;" width="12.7" height="12.7" viewBox="0 0 16 16" fill="none"><path d="M8 2.250L14.350 13.750H1.650Z" fill="#d6ae58" stroke="#d6ae58" stroke-width="2.400" stroke-linejoin="round"/><path d="M8 5v4.800" stroke="#1e1f22" stroke-width="1.800"/><rect x="7.100" y="11.200" width="1.800" height="1.800" fill="#1e1f22"/></svg>
<span class="t" style="left:2275.60px;top:86.00px;font-size:13.5px;color:#bcbec4;letter-spacing:0.000px;">6</span>
<svg class="i" style="left:2290.00px;top:87.00px;" width="16" height="16" viewBox="0 0 16 16" fill="none"><path d="M4 10L8 6L12 10" stroke="#bcbfc6" stroke-width="1.200"/></svg>
<svg class="i" style="left:2311.00px;top:87.00px;" width="16" height="16" viewBox="0 0 16 16" fill="none"><path d="M4 6L8 10L12 6" stroke="#bcbfc6" stroke-width="1.200"/></svg>
<div class="r" style="left:1217px;top:1335px;width:239px;height:30px;border-radius:4px;background:#2b2d30;box-shadow:0 3px 14px 2px rgba(0,0,0,.330)"></div>
<span class="t" style="left:1227.20px;top:1340.50px;font-size:13.5px;color:#dfe1e5;letter-spacing:0.225px;">Font size: 11pt</span>
<span class="t" style="left:1335.00px;top:1340.50px;font-size:13.5px;color:#5a8ef7;letter-spacing:0.241px;">Reset to 13pt</span>
<svg class="i" style="left:1430.10px;top:1342.50px;" width="15" height="15" viewBox="0 0 16 16" fill="none"><path d="M13.10 8.00L13.10 7.67L13.11 7.33L13.23 6.96L13.70 6.47L14.12 5.92L14.14 5.46L14.00 5.04L13.80 4.65L13.56 4.28L13.28 3.95L12.86 3.74L12.17 3.83L11.52 3.99L11.14 3.91L10.84 3.75L10.55 3.58L10.26 3.42L9.97 3.24L9.72 2.95L9.53 2.30L9.26 1.66L8.87 1.41L8.44 1.32L8.00 1.30L7.56 1.32L7.13 1.41L6.74 1.66L6.47 2.30L6.28 2.95L6.03 3.24L5.74 3.42L5.45 3.58L5.16 3.75L4.86 3.91L4.48 3.99L3.83 3.83L3.14 3.74L2.72 3.95L2.44 4.28L2.20 4.65L2.00 5.04L1.86 5.46L1.88 5.92L2.30 6.47L2.77 6.96L2.89 7.33L2.90 7.67L2.90 8.00L2.90 8.33L2.89 8.67L2.77 9.04L2.30 9.53L1.88 10.08L1.86 10.54L2.00 10.96L2.20 11.35L2.44 11.72L2.72 12.05L3.14 12.26L3.83 12.17L4.48 12.01L4.86 12.09L5.16 12.25L5.45 12.42L5.74 12.58L6.03 12.76L6.28 13.05L6.47 13.70L6.74 14.34L7.13 14.59L7.56 14.68L8.00 14.70L8.44 14.68L8.87 14.59L9.26 14.34L9.53 13.70L9.72 13.05L9.97 12.76L10.26 12.58L10.55 12.42L10.84 12.25L11.14 12.09L11.52 12.01L12.17 12.17L12.86 12.26L13.28 12.05L13.56 11.72L13.80 11.35L14.00 10.96L14.14 10.54L14.12 10.08L13.70 9.53L13.23 9.04L13.11 8.67L13.10 8.33z" stroke="#ced0d6" stroke-width="1.05" stroke-linejoin="round"/><circle cx="8" cy="8" r="2.2" stroke="#ced0d6" stroke-width="1.05"/></svg>
<svg class="i" style="left:995px;top:0" width="30" height="24" viewBox="995 0 30 24"><path d="M1003.650 -1.200L1003.650 16.400L1007.150 13.100L1009.500 18.300L1012.700 17L1010.400 12L1014.800 11.550Z" fill="#fff" stroke="#05050f" stroke-width="1.100" stroke-linejoin="round"/></svg>
</body></html>
